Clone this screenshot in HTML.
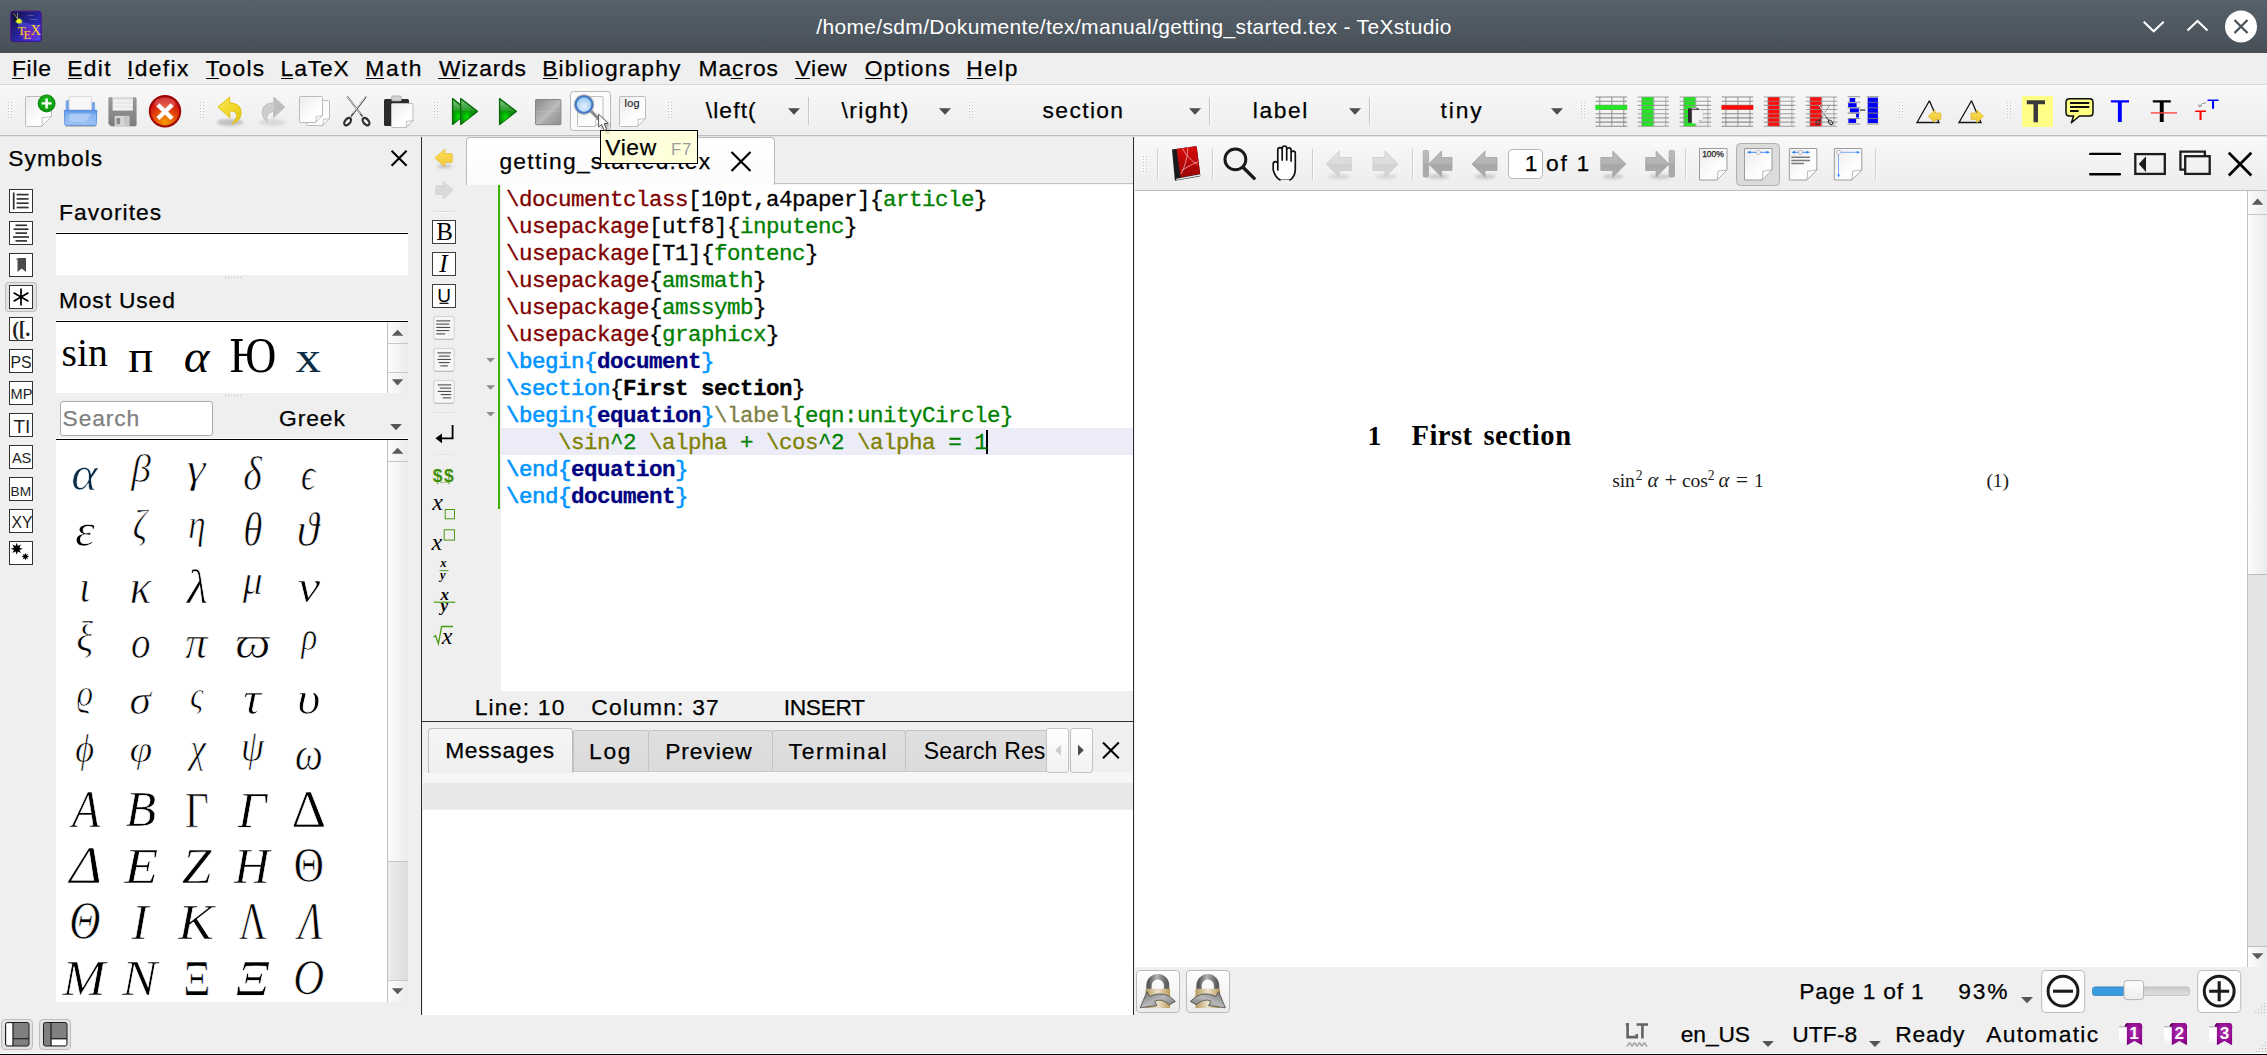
<!DOCTYPE html>
<html><head><meta charset="utf-8"><title>TeXstudio</title><style>
html,body{margin:0;padding:0;}
body{width:2267px;height:1055px;position:relative;overflow:hidden;background:#efefef;font-family:"Liberation Sans",sans-serif;}
body div,body svg,body span.t{position:absolute;}
span.t{white-space:pre;display:block;}
u{text-decoration:none;border-bottom:2px solid currentColor;}
</style></head><body>
<div style="left:0px;top:0px;width:2267px;height:53px;background:linear-gradient(#57616a,#475057);"></div>
<span class="t" style="left:816.3px;top:15px;font:normal normal 21px/23px 'Liberation Sans', sans-serif;color:#fff;letter-spacing:0.334px;">/home/sdm/Dokumente/tex/manual/getting_started.tex - TeXstudio</span>
<svg style="left:9px;top:9px;" width="34" height="34" viewBox="0 0 34 34"><defs><linearGradient id="ai1" x1="0" y1="0" x2="1" y2="1"><stop offset="0" stop-color="#141044"/><stop offset=".5" stop-color="#24249a"/><stop offset="1" stop-color="#3636f4"/></linearGradient><radialGradient id="ai2" cx=".55" cy=".62" r=".55"><stop offset="0" stop-color="#8a1fb0" stop-opacity=".95"/><stop offset="1" stop-color="#5a1fb0" stop-opacity="0"/></radialGradient><radialGradient id="ai3" cx=".5" cy=".5" r=".5"><stop offset="0" stop-color="#ffff30"/><stop offset=".55" stop-color="#d8e020"/><stop offset="1" stop-color="#30b060" stop-opacity="0"/></radialGradient></defs><rect x="1.8" y="2.2" width="30.4" height="30.4" rx="2.5" fill="url(#ai1)" stroke="#4a0f8a" stroke-width="1"/><path d="M8 12 L31 17 V31 H14 Z" fill="#6a5cff" opacity=".45"/><rect x="6" y="14" width="25" height="17" rx="4" fill="url(#ai2)"/><ellipse cx="9.8" cy="12" rx="4.6" ry="3.4" fill="url(#ai3)" transform="rotate(20 9.8 12)"/><path d="M4 3.6 L7 11 M4 3.6 L9 9 M9 3.4 V9.4 M4.6 13 L8 10" stroke="#111" stroke-width="1.2" fill="none"/><path d="M4.2 4 L8.6 9.4 V3.6" stroke="#ddd" stroke-width="0.6" fill="none"/><path d="M18.5 6.5 h6 M21 10.5 h7.5" stroke="#aab" stroke-width="0.6" opacity=".6"/><text x="8.6" y="25.6" font-family="'Liberation Serif', serif" font-size="13.5" fill="#ffd21e">T</text><text x="14.6" y="30.4" font-family="'Liberation Serif', serif" font-size="12.5" fill="#ffd21e">E</text><text x="21.4" y="26.2" font-family="'Liberation Serif', serif" font-size="14.5" fill="#ffd21e">X</text></svg>
<svg style="left:2138px;top:10px;" width="120" height="34" viewBox="0 0 120 34"><path d="M5.7 11.7 L15.7 21.3 L25.7 11.7" fill="none" stroke="#fff" stroke-width="2"/><path d="M49.5 20.5 L59.5 11 L69.5 20.5" fill="none" stroke="#fff" stroke-width="2"/><circle cx="103" cy="16.5" r="16" fill="#fff"/><path d="M96.5 10 L109.5 23 M109.5 10 L96.5 23" stroke="#475057" stroke-width="2.2" fill="none"/></svg>
<div style="left:0px;top:53px;width:2267px;height:31px;background:#efefef;"></div>
<div style="left:0px;top:84px;width:2267px;height:1px;background:#d9d9d9;"></div>
<span class="t" style="left:11.876px;top:55px;font:normal normal 22.8px/26px 'Liberation Sans', sans-serif;color:#000;letter-spacing:0.781px;-webkit-text-stroke-width:0.25px;">File</span>
<div style="left:12.1px;top:77.6px;width:11.700000000000001px;height:1.6px;background:#000;"></div>
<span class="t" style="left:67.276px;top:55px;font:normal normal 22.8px/26px 'Liberation Sans', sans-serif;color:#000;letter-spacing:1.307px;-webkit-text-stroke-width:0.25px;">Edit</span>
<div style="left:67.9px;top:77.6px;width:13.899999999999991px;height:1.6px;background:#000;"></div>
<span class="t" style="left:127.04799999999999px;top:55px;font:normal normal 22.8px/26px 'Liberation Sans', sans-serif;color:#000;letter-spacing:1.358px;-webkit-text-stroke-width:0.25px;">Idefix</span>
<div style="left:127.7px;top:77.6px;width:6.3999999999999915px;height:1.6px;background:#000;"></div>
<span class="t" style="left:205.744px;top:55px;font:normal normal 22.8px/26px 'Liberation Sans', sans-serif;color:#000;letter-spacing:1.329px;-webkit-text-stroke-width:0.25px;">Tools</span>
<div style="left:205.8px;top:77.6px;width:13.399999999999977px;height:1.6px;background:#000;"></div>
<span class="t" style="left:280.57599999999996px;top:55px;font:normal normal 22.8px/26px 'Liberation Sans', sans-serif;color:#000;letter-spacing:0.886px;-webkit-text-stroke-width:0.25px;">LaTeX</span>
<div style="left:280.8px;top:77.6px;width:12.199999999999989px;height:1.6px;background:#000;"></div>
<span class="t" style="left:365.176px;top:55px;font:normal normal 22.8px/26px 'Liberation Sans', sans-serif;color:#000;letter-spacing:1.897px;-webkit-text-stroke-width:0.25px;">Math</span>
<div style="left:365.9px;top:77.6px;width:17.900000000000034px;height:1.6px;background:#000;"></div>
<span class="t" style="left:438.98600000000005px;top:55px;font:normal normal 22.8px/26px 'Liberation Sans', sans-serif;color:#000;letter-spacing:0.767px;-webkit-text-stroke-width:0.25px;">Wizards</span>
<div style="left:437.9px;top:77.6px;width:22.200000000000045px;height:1.6px;background:#000;"></div>
<span class="t" style="left:542.176px;top:55px;font:normal normal 22.8px/26px 'Liberation Sans', sans-serif;color:#000;letter-spacing:1.165px;-webkit-text-stroke-width:0.25px;">Bibliography</span>
<div style="left:543px;top:77.6px;width:14.799999999999955px;height:1.6px;background:#000;"></div>
<span class="t" style="left:698.576px;top:55px;font:normal normal 22.8px/26px 'Liberation Sans', sans-serif;color:#000;letter-spacing:0.928px;-webkit-text-stroke-width:0.25px;">Macros</span>
<div style="left:731.1px;top:77.6px;width:11.799999999999955px;height:1.6px;background:#000;"></div>
<span class="t" style="left:795.586px;top:55px;font:normal normal 22.8px/26px 'Liberation Sans', sans-serif;color:#000;letter-spacing:0.731px;-webkit-text-stroke-width:0.25px;">View</span>
<div style="left:795.2px;top:77.6px;width:14.699999999999932px;height:1.6px;background:#000;"></div>
<span class="t" style="left:864.6740000000001px;top:55px;font:normal normal 22.8px/26px 'Liberation Sans', sans-serif;color:#000;letter-spacing:1.096px;-webkit-text-stroke-width:0.25px;">Options</span>
<div style="left:864.9px;top:77.6px;width:16.700000000000045px;height:1.6px;background:#000;"></div>
<span class="t" style="left:966.176px;top:55px;font:normal normal 22.8px/26px 'Liberation Sans', sans-serif;color:#000;letter-spacing:1.494px;-webkit-text-stroke-width:0.25px;">Help</span>
<div style="left:967px;top:77.6px;width:16.100000000000023px;height:1.6px;background:#000;"></div>
<div style="left:0px;top:85px;width:2267px;height:50px;background:linear-gradient(#f8f8f8,#ededed);"></div>
<div style="left:0px;top:135px;width:2267px;height:1px;background:#bdbdbd;"></div>
<div style="left:0px;top:136px;width:2267px;height:1px;background:#e4e4e4;"></div>
<svg style="left:0px;top:0px;width:0;height:0;" width="1" height="1" viewBox="0 0 1 1"><defs>
<filter id="bl" x="-30%" y="-100%" width="160%" height="300%"><feGaussianBlur stdDeviation="1.4"/></filter>
<linearGradient id="gpage" x1="0" y1="0" x2="1" y2="1"><stop offset="0" stop-color="#ececec"/><stop offset=".6" stop-color="#fdfdfd"/><stop offset="1" stop-color="#ffffff"/></linearGradient>
<linearGradient id="ggreen" x1="0" y1="0" x2="0" y2="1"><stop offset="0" stop-color="#4fb34f"/><stop offset=".55" stop-color="#0a8a0a"/><stop offset="1" stop-color="#10b010"/></linearGradient>
<radialGradient id="ggreen2" cx=".4" cy=".75" r=".6"><stop offset="0" stop-color="#18d818"/><stop offset="1" stop-color="#0b7d0b"/></radialGradient>
<linearGradient id="gstop" x1="0" y1="0" x2="1" y2="1"><stop offset="0" stop-color="#909090"/><stop offset=".5" stop-color="#c6c6c6"/><stop offset=".52" stop-color="#b0b0b0"/><stop offset="1" stop-color="#8c8c8c"/></linearGradient>
<radialGradient id="gred" cx=".5" cy=".85" r=".85"><stop offset="0" stop-color="#f79a00"/><stop offset=".45" stop-color="#e24a0a"/><stop offset=".8" stop-color="#d21410"/><stop offset="1" stop-color="#b00808"/></radialGradient>
<linearGradient id="gblue" x1="0" y1="0" x2="0" y2="1"><stop offset="0" stop-color="#5591e6"/><stop offset=".35" stop-color="#8ab6f2"/><stop offset="1" stop-color="#9cc2f4"/></linearGradient>
<linearGradient id="gflop" x1="0" y1="0" x2="0" y2="1"><stop offset="0" stop-color="#9a9a9a"/><stop offset="1" stop-color="#7c7c7c"/></linearGradient>
<linearGradient id="gyel" x1="0" y1="0" x2="0" y2="1"><stop offset="0" stop-color="#f7dc55"/><stop offset="1" stop-color="#f0c832"/></linearGradient>
<radialGradient id="gglass" cx=".5" cy=".6" r=".6"><stop offset="0" stop-color="#e8f4ff"/><stop offset="1" stop-color="#8cc0ee"/></radialGradient>
<radialGradient id="ggplus" cx=".5" cy=".4" r=".7"><stop offset="0" stop-color="#1fc01f"/><stop offset="1" stop-color="#078a07"/></radialGradient>
</defs></svg>
<svg style="left:0px;top:85px;" width="2267" height="50" viewBox="0 85 2267 50"><rect x="7.5" y="101.5" width="2" height="2" fill="#fff" opacity=".7"/><rect x="10.5" y="101.5" width="2" height="2" fill="#fff" opacity=".7"/><rect x="7.5" y="104.5" width="2" height="2" fill="#fff" opacity=".7"/><rect x="10.5" y="104.5" width="2" height="2" fill="#fff" opacity=".7"/><rect x="7.5" y="107.5" width="2" height="2" fill="#fff" opacity=".7"/><rect x="10.5" y="107.5" width="2" height="2" fill="#fff" opacity=".7"/><rect x="7.5" y="110.5" width="2" height="2" fill="#fff" opacity=".7"/><rect x="10.5" y="110.5" width="2" height="2" fill="#fff" opacity=".7"/><rect x="7.5" y="113.5" width="2" height="2" fill="#fff" opacity=".7"/><rect x="10.5" y="113.5" width="2" height="2" fill="#fff" opacity=".7"/><rect x="7.5" y="116.5" width="2" height="2" fill="#fff" opacity=".7"/><rect x="10.5" y="116.5" width="2" height="2" fill="#fff" opacity=".7"/><rect x="8" y="102" width="1" height="1" fill="#bdbdbd"/><rect x="11" y="102" width="1" height="1" fill="#bdbdbd"/><rect x="8" y="105" width="1" height="1" fill="#bdbdbd"/><rect x="11" y="105" width="1" height="1" fill="#bdbdbd"/><rect x="8" y="108" width="1" height="1" fill="#bdbdbd"/><rect x="11" y="108" width="1" height="1" fill="#bdbdbd"/><rect x="8" y="111" width="1" height="1" fill="#bdbdbd"/><rect x="11" y="111" width="1" height="1" fill="#bdbdbd"/><rect x="8" y="114" width="1" height="1" fill="#bdbdbd"/><rect x="11" y="114" width="1" height="1" fill="#bdbdbd"/><rect x="8" y="117" width="1" height="1" fill="#bdbdbd"/><rect x="11" y="117" width="1" height="1" fill="#bdbdbd"/><path d="M26.5 96.5 H50.5 Q51.5 96.5 51.5 97.5 V116.5 L41.5 126.5 H26.5 Q25.5 126.5 25.5 125.5 V97.5 Q25.5 96.5 26.5 96.5 Z" fill="url(#gpage)" stroke="#bcbcbc" stroke-width="1"/><path d="M51.5 116.5 Q46.0 117.5 42.0 117.5 Q43.0 122.0 41.5 126.5 Z" fill="#fff" stroke="#b4b4b4" stroke-width="0.8"/><circle cx="46.6" cy="103.4" r="8.5" fill="url(#ggplus)" stroke="#078007" stroke-width="0.9"/><path d="M41.6 103.4 H51.6 M46.6 98.4 V108.4" stroke="#fff" stroke-width="2.4"/><path d="M66.8 100.6 H69.6 V110.5 H66.2 V101.2 Q66.2 100.6 66.8 100.6 Z M91.3 102.4 H94 Q94.6 102.4 94.6 103 V110.5 H91.3 Z" fill="#6fa2ea" stroke="#5b90de" stroke-width="0.6"/><path d="M69.6 96.6 H91 Q91.6 96.6 91.6 97.2 V111 H69.1 V97.2 Q69.1 96.6 69.6 96.6 Z" fill="#f7f7f7" stroke="#d0d0d0" stroke-width="0.8"/><path d="M64.3 110.3 H96.8 L96.2 124.4 Q96.1 125.4 95.1 125.4 H66 Q65 125.4 64.9 124.4 Z" fill="url(#gblue)" stroke="#4f88d8" stroke-width="0.9"/><path d="M69.5 113.5 H91.5 L86 121.5 H69.5 Z" fill="#c4dcfa" opacity=".55"/><path d="M65.5 126.3 H95.6" stroke="#8f8f8f" stroke-width="0.9" opacity=".7"/><path d="M109.5 97.3 H135.2 Q136.6 97.3 136.6 98.7 V124.8 Q136.6 126.2 135.2 126.2 H110.8 L108.4 123.8 V98.6 Q108.4 97.3 109.5 97.3 Z" fill="url(#gflop)"/><rect x="112.6" y="97.3" width="20.3" height="13.3" fill="#f1f1f1"/><rect x="112.6" y="97.3" width="20.3" height="2.2" fill="#dadada"/><path d="M113 103 H132.6 M113 106.6 H132.6" stroke="#dedede" stroke-width="0.9"/><rect x="114.7" y="115.9" width="14.8" height="10.3" fill="#d4d4d4"/><rect x="124" y="115.9" width="5.5" height="10.3" fill="#bdbdbd" opacity=".6"/><rect x="116.5" y="118" width="3.6" height="6.2" fill="#8a8a8a"/><circle cx="165" cy="111.3" r="15.2" fill="url(#gred)" stroke="#a00505" stroke-width="2"/><ellipse cx="165" cy="103.6" rx="10.5" ry="6" fill="#fff" opacity=".22"/><path d="M157.9 104.9 L172.1 118.5 M172.1 104.9 L157.9 118.5" stroke="#fff" stroke-width="4.3"/><rect x="199.5" y="101.5" width="2" height="2" fill="#fff" opacity=".7"/><rect x="202.5" y="101.5" width="2" height="2" fill="#fff" opacity=".7"/><rect x="199.5" y="104.5" width="2" height="2" fill="#fff" opacity=".7"/><rect x="202.5" y="104.5" width="2" height="2" fill="#fff" opacity=".7"/><rect x="199.5" y="107.5" width="2" height="2" fill="#fff" opacity=".7"/><rect x="202.5" y="107.5" width="2" height="2" fill="#fff" opacity=".7"/><rect x="199.5" y="110.5" width="2" height="2" fill="#fff" opacity=".7"/><rect x="202.5" y="110.5" width="2" height="2" fill="#fff" opacity=".7"/><rect x="199.5" y="113.5" width="2" height="2" fill="#fff" opacity=".7"/><rect x="202.5" y="113.5" width="2" height="2" fill="#fff" opacity=".7"/><rect x="199.5" y="116.5" width="2" height="2" fill="#fff" opacity=".7"/><rect x="202.5" y="116.5" width="2" height="2" fill="#fff" opacity=".7"/><rect x="200" y="102" width="1" height="1" fill="#bdbdbd"/><rect x="203" y="102" width="1" height="1" fill="#bdbdbd"/><rect x="200" y="105" width="1" height="1" fill="#bdbdbd"/><rect x="203" y="105" width="1" height="1" fill="#bdbdbd"/><rect x="200" y="108" width="1" height="1" fill="#bdbdbd"/><rect x="203" y="108" width="1" height="1" fill="#bdbdbd"/><rect x="200" y="111" width="1" height="1" fill="#bdbdbd"/><rect x="203" y="111" width="1" height="1" fill="#bdbdbd"/><rect x="200" y="114" width="1" height="1" fill="#bdbdbd"/><rect x="203" y="114" width="1" height="1" fill="#bdbdbd"/><rect x="200" y="117" width="1" height="1" fill="#bdbdbd"/><rect x="203" y="117" width="1" height="1" fill="#bdbdbd"/><defs><linearGradient id="gyu" x1="0" y1="0" x2="1" y2="1"><stop offset="0" stop-color="#f7e858"/><stop offset=".5" stop-color="#f2d92a"/><stop offset="1" stop-color="#e4c212"/></linearGradient></defs><ellipse cx="230" cy="122.4" rx="13" ry="3.4" fill="#000" opacity=".2" filter="url(#bl)"/><path d="M217.9 107.1 L229.5 97 L229.8 102.8 Q241.6 103.4 241.1 113.6 Q240.5 121.2 231.8 124 Q237.6 118 236.6 114.6 Q235.2 110.6 229.8 111.1 L229.9 117.8 Z" fill="url(#gyu)" stroke="#dcbe10" stroke-width="0.9" stroke-linejoin="round"/><ellipse cx="272.5" cy="122.4" rx="13" ry="3.4" fill="#000" opacity=".09" filter="url(#bl)"/><path d="M284.9 107.1 L273.9 97 L273.6 102.8 Q261.8 103.4 262.2 113 Q262.6 118.8 267.2 121 Q265 113.5 273.6 111.1 L273.5 117.8 Z" fill="#cdcdcd" stroke="#bcbcbc" stroke-width="0.9" stroke-linejoin="round"/><path d="M284.2 107.1 L274.2 98 L274 116.6 Z" fill="#b9b9b9" opacity=".7"/><path d="M307.5 100.5 H328.5 Q329.5 100.5 329.5 101.5 V118.5 L322.5 125.5 H307.5 Q306.5 125.5 306.5 124.5 V101.5 Q306.5 100.5 307.5 100.5 Z" fill="url(#gpage)" stroke="#bcbcbc" stroke-width="1"/><path d="M329.5 118.5 Q325.65 119.2 323.0 119.5 Q324.0 122.35 322.5 125.5 Z" fill="#fff" stroke="#b4b4b4" stroke-width="0.8"/><path d="M300.5 96.5 H321.5 Q322.5 96.5 322.5 97.5 V115.5 L315.5 122.5 H300.5 Q299.5 122.5 299.5 121.5 V97.5 Q299.5 96.5 300.5 96.5 Z" fill="url(#gpage)" stroke="#bcbcbc" stroke-width="1"/><path d="M322.5 115.5 Q318.65 116.2 316.0 116.5 Q317.0 119.35 315.5 122.5 Z" fill="#fff" stroke="#b4b4b4" stroke-width="0.8"/><path d="M347.2 96.5 L362.5 116.5 M366.2 96.5 L351 116.5" stroke="#4a4a4a" stroke-width="1.5" fill="none"/><path d="M346.8 96.3 L360.5 114" stroke="#dcdcdc" stroke-width="1" /><path d="M365.8 96.3 L353 113" stroke="#dcdcdc" stroke-width="1"/><ellipse cx="347.6" cy="121.6" rx="2.6" ry="4.3" transform="rotate(40 347.6 121.6)" fill="none" stroke="#2e2e2e" stroke-width="2.2"/><ellipse cx="366" cy="121.6" rx="2.6" ry="4.3" transform="rotate(-40 366 121.6)" fill="none" stroke="#2e2e2e" stroke-width="2.2"/><rect x="384" y="99" width="25" height="27" rx="1.5" fill="#2b2b2b"/><rect x="391.5" y="96" width="10" height="5" rx="1.5" fill="#d2d2d2" stroke="#9a9a9a" stroke-width="0.7"/><path d="M392.5 103.5 H412.0 Q413.0 103.5 413.0 104.5 V120.5 L406.0 127.5 H392.5 Q391.5 127.5 391.5 126.5 V104.5 Q391.5 103.5 392.5 103.5 Z" fill="url(#gpage)" stroke="#bcbcbc" stroke-width="1"/><path d="M413.0 120.5 Q409.15 121.2 406.5 121.5 Q407.5 124.35 406.0 127.5 Z" fill="#fff" stroke="#b4b4b4" stroke-width="0.8"/><rect x="433.5" y="101.5" width="2" height="2" fill="#fff" opacity=".7"/><rect x="436.5" y="101.5" width="2" height="2" fill="#fff" opacity=".7"/><rect x="433.5" y="104.5" width="2" height="2" fill="#fff" opacity=".7"/><rect x="436.5" y="104.5" width="2" height="2" fill="#fff" opacity=".7"/><rect x="433.5" y="107.5" width="2" height="2" fill="#fff" opacity=".7"/><rect x="436.5" y="107.5" width="2" height="2" fill="#fff" opacity=".7"/><rect x="433.5" y="110.5" width="2" height="2" fill="#fff" opacity=".7"/><rect x="436.5" y="110.5" width="2" height="2" fill="#fff" opacity=".7"/><rect x="433.5" y="113.5" width="2" height="2" fill="#fff" opacity=".7"/><rect x="436.5" y="113.5" width="2" height="2" fill="#fff" opacity=".7"/><rect x="433.5" y="116.5" width="2" height="2" fill="#fff" opacity=".7"/><rect x="436.5" y="116.5" width="2" height="2" fill="#fff" opacity=".7"/><rect x="434" y="102" width="1" height="1" fill="#bdbdbd"/><rect x="437" y="102" width="1" height="1" fill="#bdbdbd"/><rect x="434" y="105" width="1" height="1" fill="#bdbdbd"/><rect x="437" y="105" width="1" height="1" fill="#bdbdbd"/><rect x="434" y="108" width="1" height="1" fill="#bdbdbd"/><rect x="437" y="108" width="1" height="1" fill="#bdbdbd"/><rect x="434" y="111" width="1" height="1" fill="#bdbdbd"/><rect x="437" y="111" width="1" height="1" fill="#bdbdbd"/><rect x="434" y="114" width="1" height="1" fill="#bdbdbd"/><rect x="437" y="114" width="1" height="1" fill="#bdbdbd"/><rect x="434" y="117" width="1" height="1" fill="#bdbdbd"/><rect x="437" y="117" width="1" height="1" fill="#bdbdbd"/><defs><linearGradient id="gtri" x1="0" y1="0" x2="0" y2="1"><stop offset="0" stop-color="#86cf86"/><stop offset=".47" stop-color="#2c962c"/><stop offset=".5" stop-color="#0b8c0b"/><stop offset="1" stop-color="#0a8a0a"/></linearGradient><radialGradient id="gglow" cx=".35" cy=".72" r=".38"><stop offset="0" stop-color="#00e400"/><stop offset="1" stop-color="#00c000" stop-opacity="0"/></radialGradient><linearGradient id="gstop2" x1="0" y1="0" x2="1" y2="1"><stop offset="0" stop-color="#8a8a8a"/><stop offset=".55" stop-color="#bcbcbc"/><stop offset=".6" stop-color="#adadad"/><stop offset="1" stop-color="#8e8e8e"/></linearGradient></defs><path d="M452.59999999999997 98.6 L468.4 111.4 L452.59999999999997 124.4 Z" fill="url(#gtri)" stroke="#0a6a0a" stroke-width="1.4" stroke-linejoin="round"/><path d="M452.59999999999997 98.6 L468.4 111.4 L452.59999999999997 124.4 Z" fill="url(#gglow)"/><path d="M460.7 98.6 L477.4 111.4 L460.7 124.4 Z" fill="url(#gtri)" stroke="#0a6a0a" stroke-width="1.4" stroke-linejoin="round"/><path d="M460.7 98.6 L477.4 111.4 L460.7 124.4 Z" fill="url(#gglow)"/><path d="M499.59999999999997 98.6 L516.3 111.4 L499.59999999999997 124.4 Z" fill="url(#gtri)" stroke="#0a6a0a" stroke-width="1.4" stroke-linejoin="round"/><path d="M499.59999999999997 98.6 L516.3 111.4 L499.59999999999997 124.4 Z" fill="url(#gglow)"/><rect x="535.5" y="99.5" width="25.4" height="25.2" rx="0.8" fill="url(#gstop2)" stroke="#808080" stroke-width="0.9"/><path d="M536 111.6 H560.5" stroke="#c8c8c8" stroke-width="0.6" opacity=".6"/><rect x="570.5" y="91.5" width="40" height="39" rx="3" fill="#fbfbfb" stroke="#b9b9b9"/><path d="M578.5 96.5 H602.0 Q603.0 96.5 603.0 97.5 V118.5 L595.0 126.5 H578.5 Q577.5 126.5 577.5 125.5 V97.5 Q577.5 96.5 578.5 96.5 Z" fill="url(#gpage)" stroke="#bcbcbc" stroke-width="1"/><path d="M603.0 118.5 Q598.6 119.3 595.5 119.5 Q596.5 122.9 595.0 126.5 Z" fill="#fff" stroke="#b4b4b4" stroke-width="0.8"/><path d="M591 111 L600 120.5" stroke="#8a8a8a" stroke-width="3.2" stroke-linecap="round"/><circle cx="584" cy="104.6" r="8.4" fill="url(#gglass)" stroke="#3f78c8" stroke-width="2.2"/><circle cx="584" cy="104.6" r="9.8" fill="none" stroke="#9a9a9a" stroke-width="0.8"/><path d="M620.5 96.5 H644.5 Q645.5 96.5 645.5 97.5 V118.5 L637.5 126.5 H620.5 Q619.5 126.5 619.5 125.5 V97.5 Q619.5 96.5 620.5 96.5 Z" fill="url(#gpage)" stroke="#bcbcbc" stroke-width="1"/><path d="M645.5 118.5 Q641.1 119.3 638.0 119.5 Q639.0 122.9 637.5 126.5 Z" fill="#fff" stroke="#b4b4b4" stroke-width="0.8"/><rect x="667.5" y="101.5" width="2" height="2" fill="#fff" opacity=".7"/><rect x="670.5" y="101.5" width="2" height="2" fill="#fff" opacity=".7"/><rect x="667.5" y="104.5" width="2" height="2" fill="#fff" opacity=".7"/><rect x="670.5" y="104.5" width="2" height="2" fill="#fff" opacity=".7"/><rect x="667.5" y="107.5" width="2" height="2" fill="#fff" opacity=".7"/><rect x="670.5" y="107.5" width="2" height="2" fill="#fff" opacity=".7"/><rect x="667.5" y="110.5" width="2" height="2" fill="#fff" opacity=".7"/><rect x="670.5" y="110.5" width="2" height="2" fill="#fff" opacity=".7"/><rect x="667.5" y="113.5" width="2" height="2" fill="#fff" opacity=".7"/><rect x="670.5" y="113.5" width="2" height="2" fill="#fff" opacity=".7"/><rect x="667.5" y="116.5" width="2" height="2" fill="#fff" opacity=".7"/><rect x="670.5" y="116.5" width="2" height="2" fill="#fff" opacity=".7"/><rect x="668" y="102" width="1" height="1" fill="#bdbdbd"/><rect x="671" y="102" width="1" height="1" fill="#bdbdbd"/><rect x="668" y="105" width="1" height="1" fill="#bdbdbd"/><rect x="671" y="105" width="1" height="1" fill="#bdbdbd"/><rect x="668" y="108" width="1" height="1" fill="#bdbdbd"/><rect x="671" y="108" width="1" height="1" fill="#bdbdbd"/><rect x="668" y="111" width="1" height="1" fill="#bdbdbd"/><rect x="671" y="111" width="1" height="1" fill="#bdbdbd"/><rect x="668" y="114" width="1" height="1" fill="#bdbdbd"/><rect x="671" y="114" width="1" height="1" fill="#bdbdbd"/><rect x="668" y="117" width="1" height="1" fill="#bdbdbd"/><rect x="671" y="117" width="1" height="1" fill="#bdbdbd"/><path d="M788 108.2 H800 L794 114.80000000000001 Z" fill="#4b4b4b"/><path d="M808.5 97 V125" stroke="#c6c6c6" stroke-width="1"/><path d="M809.5 97 V125" stroke="#fbfbfb" stroke-width="1"/><path d="M939 108.2 H951 L945 114.80000000000001 Z" fill="#4b4b4b"/><rect x="968.5" y="101.5" width="2" height="2" fill="#fff" opacity=".7"/><rect x="971.5" y="101.5" width="2" height="2" fill="#fff" opacity=".7"/><rect x="968.5" y="104.5" width="2" height="2" fill="#fff" opacity=".7"/><rect x="971.5" y="104.5" width="2" height="2" fill="#fff" opacity=".7"/><rect x="968.5" y="107.5" width="2" height="2" fill="#fff" opacity=".7"/><rect x="971.5" y="107.5" width="2" height="2" fill="#fff" opacity=".7"/><rect x="968.5" y="110.5" width="2" height="2" fill="#fff" opacity=".7"/><rect x="971.5" y="110.5" width="2" height="2" fill="#fff" opacity=".7"/><rect x="968.5" y="113.5" width="2" height="2" fill="#fff" opacity=".7"/><rect x="971.5" y="113.5" width="2" height="2" fill="#fff" opacity=".7"/><rect x="968.5" y="116.5" width="2" height="2" fill="#fff" opacity=".7"/><rect x="971.5" y="116.5" width="2" height="2" fill="#fff" opacity=".7"/><rect x="969" y="102" width="1" height="1" fill="#bdbdbd"/><rect x="972" y="102" width="1" height="1" fill="#bdbdbd"/><rect x="969" y="105" width="1" height="1" fill="#bdbdbd"/><rect x="972" y="105" width="1" height="1" fill="#bdbdbd"/><rect x="969" y="108" width="1" height="1" fill="#bdbdbd"/><rect x="972" y="108" width="1" height="1" fill="#bdbdbd"/><rect x="969" y="111" width="1" height="1" fill="#bdbdbd"/><rect x="972" y="111" width="1" height="1" fill="#bdbdbd"/><rect x="969" y="114" width="1" height="1" fill="#bdbdbd"/><rect x="972" y="114" width="1" height="1" fill="#bdbdbd"/><rect x="969" y="117" width="1" height="1" fill="#bdbdbd"/><rect x="972" y="117" width="1" height="1" fill="#bdbdbd"/><path d="M1189 108.2 H1201 L1195 114.80000000000001 Z" fill="#4b4b4b"/><path d="M1209.5 97 V125" stroke="#c6c6c6" stroke-width="1"/><path d="M1210.5 97 V125" stroke="#fbfbfb" stroke-width="1"/><path d="M1349 108.2 H1361 L1355 114.80000000000001 Z" fill="#4b4b4b"/><path d="M1369.5 97 V125" stroke="#c6c6c6" stroke-width="1"/><path d="M1370.5 97 V125" stroke="#fbfbfb" stroke-width="1"/><path d="M1551 108.2 H1563 L1557 114.80000000000001 Z" fill="#4b4b4b"/><rect x="1580.5" y="101.5" width="2" height="2" fill="#fff" opacity=".7"/><rect x="1583.5" y="101.5" width="2" height="2" fill="#fff" opacity=".7"/><rect x="1580.5" y="104.5" width="2" height="2" fill="#fff" opacity=".7"/><rect x="1583.5" y="104.5" width="2" height="2" fill="#fff" opacity=".7"/><rect x="1580.5" y="107.5" width="2" height="2" fill="#fff" opacity=".7"/><rect x="1583.5" y="107.5" width="2" height="2" fill="#fff" opacity=".7"/><rect x="1580.5" y="110.5" width="2" height="2" fill="#fff" opacity=".7"/><rect x="1583.5" y="110.5" width="2" height="2" fill="#fff" opacity=".7"/><rect x="1580.5" y="113.5" width="2" height="2" fill="#fff" opacity=".7"/><rect x="1583.5" y="113.5" width="2" height="2" fill="#fff" opacity=".7"/><rect x="1580.5" y="116.5" width="2" height="2" fill="#fff" opacity=".7"/><rect x="1583.5" y="116.5" width="2" height="2" fill="#fff" opacity=".7"/><rect x="1581" y="102" width="1" height="1" fill="#bdbdbd"/><rect x="1584" y="102" width="1" height="1" fill="#bdbdbd"/><rect x="1581" y="105" width="1" height="1" fill="#bdbdbd"/><rect x="1584" y="105" width="1" height="1" fill="#bdbdbd"/><rect x="1581" y="108" width="1" height="1" fill="#bdbdbd"/><rect x="1584" y="108" width="1" height="1" fill="#bdbdbd"/><rect x="1581" y="111" width="1" height="1" fill="#bdbdbd"/><rect x="1584" y="111" width="1" height="1" fill="#bdbdbd"/><rect x="1581" y="114" width="1" height="1" fill="#bdbdbd"/><rect x="1584" y="114" width="1" height="1" fill="#bdbdbd"/><rect x="1581" y="117" width="1" height="1" fill="#bdbdbd"/><rect x="1584" y="117" width="1" height="1" fill="#bdbdbd"/><rect x="1595.6" y="105.2" width="31.5" height="4.4" fill="#1fe81f"/><path d="M1595.6 97.00 H1627.1" stroke="#8c8c8c" stroke-width="1.1"/><path d="M1595.6 101.18 H1627.1" stroke="#8c8c8c" stroke-width="1.1"/><path d="M1595.6 105.36 H1627.1" stroke="#8c8c8c" stroke-width="1.1"/><path d="M1595.6 109.54 H1627.1" stroke="#8c8c8c" stroke-width="1.1"/><path d="M1595.6 113.72 H1627.1" stroke="#8c8c8c" stroke-width="1.1"/><path d="M1595.6 117.90 H1627.1" stroke="#8c8c8c" stroke-width="1.1"/><path d="M1595.6 122.08 H1627.1" stroke="#8c8c8c" stroke-width="1.1"/><path d="M1595.6 126.26 H1627.1" stroke="#8c8c8c" stroke-width="1.1"/><path d="M1599.8 97 V126.3 M1611.8 97 V126.3 M1623.8 97 V126.3" stroke="#8c8c8c" stroke-width="0.9"/><rect x="1595.6" y="105.2" width="31.5" height="4.4" fill="#1fe81f" opacity=".92"/><rect x="1641.83" y="97" width="11.6" height="29.3" fill="#1fe81f"/><path d="M1637.6299999999999 97.00 H1669.1299999999999" stroke="#8c8c8c" stroke-width="1.1" opacity=".8"/><path d="M1637.6299999999999 101.18 H1669.1299999999999" stroke="#8c8c8c" stroke-width="1.1" opacity=".8"/><path d="M1637.6299999999999 105.36 H1669.1299999999999" stroke="#8c8c8c" stroke-width="1.1" opacity=".8"/><path d="M1637.6299999999999 109.54 H1669.1299999999999" stroke="#8c8c8c" stroke-width="1.1" opacity=".8"/><path d="M1637.6299999999999 113.72 H1669.1299999999999" stroke="#8c8c8c" stroke-width="1.1" opacity=".8"/><path d="M1637.6299999999999 117.90 H1669.1299999999999" stroke="#8c8c8c" stroke-width="1.1" opacity=".8"/><path d="M1637.6299999999999 122.08 H1669.1299999999999" stroke="#8c8c8c" stroke-width="1.1" opacity=".8"/><path d="M1637.6299999999999 126.26 H1669.1299999999999" stroke="#8c8c8c" stroke-width="1.1" opacity=".8"/><path d="M1641.83 97 V126.3 M1653.83 97 V126.3 M1665.83 97 V126.3" stroke="#8c8c8c" stroke-width="0.9" opacity=".75"/><rect x="1683.86" y="97" width="11.6" height="29.3" fill="#1fe81f"/><path d="M1679.6599999999999 97.00 H1711.1599999999999" stroke="#8c8c8c" stroke-width="1.1" opacity=".8"/><path d="M1679.6599999999999 101.18 H1711.1599999999999" stroke="#8c8c8c" stroke-width="1.1" opacity=".8"/><path d="M1679.6599999999999 105.36 H1711.1599999999999" stroke="#8c8c8c" stroke-width="1.1" opacity=".8"/><path d="M1679.6599999999999 109.54 H1711.1599999999999" stroke="#8c8c8c" stroke-width="1.1" opacity=".8"/><path d="M1679.6599999999999 113.72 H1711.1599999999999" stroke="#8c8c8c" stroke-width="1.1" opacity=".8"/><path d="M1679.6599999999999 117.90 H1711.1599999999999" stroke="#8c8c8c" stroke-width="1.1" opacity=".8"/><path d="M1679.6599999999999 122.08 H1711.1599999999999" stroke="#8c8c8c" stroke-width="1.1" opacity=".8"/><path d="M1679.6599999999999 126.26 H1711.1599999999999" stroke="#8c8c8c" stroke-width="1.1" opacity=".8"/><path d="M1683.86 97 V126.3 M1695.86 97 V126.3 M1707.86 97 V126.3" stroke="#8c8c8c" stroke-width="0.9" opacity=".75"/><rect x="1721.6899999999998" y="105.2" width="31.5" height="4.4" fill="#ff0a0a"/><path d="M1721.6899999999998 97.00 H1753.1899999999998" stroke="#8c8c8c" stroke-width="1.1"/><path d="M1721.6899999999998 101.18 H1753.1899999999998" stroke="#8c8c8c" stroke-width="1.1"/><path d="M1721.6899999999998 105.36 H1753.1899999999998" stroke="#8c8c8c" stroke-width="1.1"/><path d="M1721.6899999999998 109.54 H1753.1899999999998" stroke="#8c8c8c" stroke-width="1.1"/><path d="M1721.6899999999998 113.72 H1753.1899999999998" stroke="#8c8c8c" stroke-width="1.1"/><path d="M1721.6899999999998 117.90 H1753.1899999999998" stroke="#8c8c8c" stroke-width="1.1"/><path d="M1721.6899999999998 122.08 H1753.1899999999998" stroke="#8c8c8c" stroke-width="1.1"/><path d="M1721.6899999999998 126.26 H1753.1899999999998" stroke="#8c8c8c" stroke-width="1.1"/><path d="M1725.8899999999999 97 V126.3 M1737.8899999999999 97 V126.3 M1749.8899999999999 97 V126.3" stroke="#8c8c8c" stroke-width="0.9"/><rect x="1721.6899999999998" y="105.2" width="31.5" height="4.4" fill="#ff0a0a" opacity=".92"/><rect x="1767.9199999999998" y="97" width="11.6" height="29.3" fill="#ff0a0a"/><path d="M1763.7199999999998 97.00 H1795.2199999999998" stroke="#8c8c8c" stroke-width="1.1" opacity=".8"/><path d="M1763.7199999999998 101.18 H1795.2199999999998" stroke="#8c8c8c" stroke-width="1.1" opacity=".8"/><path d="M1763.7199999999998 105.36 H1795.2199999999998" stroke="#8c8c8c" stroke-width="1.1" opacity=".8"/><path d="M1763.7199999999998 109.54 H1795.2199999999998" stroke="#8c8c8c" stroke-width="1.1" opacity=".8"/><path d="M1763.7199999999998 113.72 H1795.2199999999998" stroke="#8c8c8c" stroke-width="1.1" opacity=".8"/><path d="M1763.7199999999998 117.90 H1795.2199999999998" stroke="#8c8c8c" stroke-width="1.1" opacity=".8"/><path d="M1763.7199999999998 122.08 H1795.2199999999998" stroke="#8c8c8c" stroke-width="1.1" opacity=".8"/><path d="M1763.7199999999998 126.26 H1795.2199999999998" stroke="#8c8c8c" stroke-width="1.1" opacity=".8"/><path d="M1767.9199999999998 97 V126.3 M1779.9199999999998 97 V126.3 M1791.9199999999998 97 V126.3" stroke="#8c8c8c" stroke-width="0.9" opacity=".75"/><rect x="1809.95" y="97" width="11.6" height="29.3" fill="#ff0a0a"/><path d="M1805.75 97.00 H1837.25" stroke="#8c8c8c" stroke-width="1.1" opacity=".8"/><path d="M1805.75 101.18 H1837.25" stroke="#8c8c8c" stroke-width="1.1" opacity=".8"/><path d="M1805.75 105.36 H1837.25" stroke="#8c8c8c" stroke-width="1.1" opacity=".8"/><path d="M1805.75 109.54 H1837.25" stroke="#8c8c8c" stroke-width="1.1" opacity=".8"/><path d="M1805.75 113.72 H1837.25" stroke="#8c8c8c" stroke-width="1.1" opacity=".8"/><path d="M1805.75 117.90 H1837.25" stroke="#8c8c8c" stroke-width="1.1" opacity=".8"/><path d="M1805.75 122.08 H1837.25" stroke="#8c8c8c" stroke-width="1.1" opacity=".8"/><path d="M1805.75 126.26 H1837.25" stroke="#8c8c8c" stroke-width="1.1" opacity=".8"/><path d="M1809.95 97 V126.3 M1821.95 97 V126.3 M1833.95 97 V126.3" stroke="#8c8c8c" stroke-width="0.9" opacity=".75"/><rect x="1688" y="108.3" width="11" height="14.5" rx="0.8" fill="#2b2b2b"/><rect x="1691.3" y="107.2" width="5" height="2" fill="#aaa"/><path d="M1692 110 H1702 Q1703 110 1703 111 V118 Q1703 122 1699 123.3 H1692 Z" fill="#f4f4f4" stroke="#cfcfcf" stroke-width="0.5"/><circle cx="1700.2" cy="121.5" r="1.3" fill="none" stroke="#888" stroke-width="0.6"/><path d="M1818 105 L1829 121 M1829.5 105 L1819 121" stroke="#3c3c3c" stroke-width="1" fill="none"/><path d="M1818.8 105 L1827 117 M1828.8 105.5 L1822 116" stroke="#e6e6e6" stroke-width="1" fill="none"/><ellipse cx="1818" cy="122.3" rx="1.6" ry="2.6" transform="rotate(40 1818 122.3)" fill="none" stroke="#333" stroke-width="1"/><ellipse cx="1830.5" cy="122.3" rx="1.6" ry="2.6" transform="rotate(-40 1830.5 122.3)" fill="none" stroke="#333" stroke-width="1"/><rect x="1849.6" y="98" width="5.6" height="4.1" fill="#0000f8"/><rect x="1848.2" y="103.15" width="8.4" height="4.1" fill="#0000f8"/><rect x="1849.9" y="108.3" width="9" height="4.1" fill="#0000f8"/><rect x="1856.1" y="113.5" width="2.8" height="4.1" fill="#0000f8"/><rect x="1848.4" y="118.8" width="7.7" height="4.1" fill="#0000f8"/><rect x="1867.7" y="97.6" width="10.2" height="25.5" fill="#0000f8"/><path d="M1847.6 96.80 H1860.2 M1866.8 96.80 H1878.8" stroke="#808080" stroke-width="1.1" opacity=".85"/><path d="M1847.6 102.24 H1860.2 M1866.8 102.24 H1878.8" stroke="#808080" stroke-width="1.1" opacity=".85"/><path d="M1847.6 107.68 H1860.2 M1866.8 107.68 H1878.8" stroke="#808080" stroke-width="1.1" opacity=".85"/><path d="M1847.6 113.12 H1860.2 M1866.8 113.12 H1878.8" stroke="#808080" stroke-width="1.1" opacity=".85"/><path d="M1847.6 118.56 H1860.2 M1866.8 118.56 H1878.8" stroke="#808080" stroke-width="1.1" opacity=".85"/><path d="M1847.6 124.00 H1860.2 M1866.8 124.00 H1878.8" stroke="#808080" stroke-width="1.1" opacity=".85"/><path d="M1859.8 110.1 H1865.4" stroke="#555" stroke-width="1.5"/><rect x="1898.5" y="101.5" width="2" height="2" fill="#fff" opacity=".7"/><rect x="1901.5" y="101.5" width="2" height="2" fill="#fff" opacity=".7"/><rect x="1898.5" y="104.5" width="2" height="2" fill="#fff" opacity=".7"/><rect x="1901.5" y="104.5" width="2" height="2" fill="#fff" opacity=".7"/><rect x="1898.5" y="107.5" width="2" height="2" fill="#fff" opacity=".7"/><rect x="1901.5" y="107.5" width="2" height="2" fill="#fff" opacity=".7"/><rect x="1898.5" y="110.5" width="2" height="2" fill="#fff" opacity=".7"/><rect x="1901.5" y="110.5" width="2" height="2" fill="#fff" opacity=".7"/><rect x="1898.5" y="113.5" width="2" height="2" fill="#fff" opacity=".7"/><rect x="1901.5" y="113.5" width="2" height="2" fill="#fff" opacity=".7"/><rect x="1898.5" y="116.5" width="2" height="2" fill="#fff" opacity=".7"/><rect x="1901.5" y="116.5" width="2" height="2" fill="#fff" opacity=".7"/><rect x="1899" y="102" width="1" height="1" fill="#bdbdbd"/><rect x="1902" y="102" width="1" height="1" fill="#bdbdbd"/><rect x="1899" y="105" width="1" height="1" fill="#bdbdbd"/><rect x="1902" y="105" width="1" height="1" fill="#bdbdbd"/><rect x="1899" y="108" width="1" height="1" fill="#bdbdbd"/><rect x="1902" y="108" width="1" height="1" fill="#bdbdbd"/><rect x="1899" y="111" width="1" height="1" fill="#bdbdbd"/><rect x="1902" y="111" width="1" height="1" fill="#bdbdbd"/><rect x="1899" y="114" width="1" height="1" fill="#bdbdbd"/><rect x="1902" y="114" width="1" height="1" fill="#bdbdbd"/><rect x="1899" y="117" width="1" height="1" fill="#bdbdbd"/><rect x="1902" y="117" width="1" height="1" fill="#bdbdbd"/><path d="M1929.4 100.8 L1917 122.5 H1939 L1929.4 100.8" fill="none" stroke="#111" stroke-width="1.3" stroke-linejoin="miter"/><path d="M1928.2 116.3 L1935.0 109.8 V113.0 H1940.8 V119.6 H1935.0 V122.8 Z" fill="url(#gyel)" stroke="#d9b020" stroke-width="0.6"/><path d="M1971.5 100.8 L1959 122.5 H1981 L1971.5 100.8" fill="none" stroke="#111" stroke-width="1.3"/><path d="M1983.6 116.3 L1976.8 109.8 V113.0 H1971.0 V119.6 H1976.8 V122.8 Z" fill="url(#gyel)" stroke="#d9b020" stroke-width="0.6"/><rect x="2006.5" y="101.5" width="2" height="2" fill="#fff" opacity=".7"/><rect x="2009.5" y="101.5" width="2" height="2" fill="#fff" opacity=".7"/><rect x="2006.5" y="104.5" width="2" height="2" fill="#fff" opacity=".7"/><rect x="2009.5" y="104.5" width="2" height="2" fill="#fff" opacity=".7"/><rect x="2006.5" y="107.5" width="2" height="2" fill="#fff" opacity=".7"/><rect x="2009.5" y="107.5" width="2" height="2" fill="#fff" opacity=".7"/><rect x="2006.5" y="110.5" width="2" height="2" fill="#fff" opacity=".7"/><rect x="2009.5" y="110.5" width="2" height="2" fill="#fff" opacity=".7"/><rect x="2006.5" y="113.5" width="2" height="2" fill="#fff" opacity=".7"/><rect x="2009.5" y="113.5" width="2" height="2" fill="#fff" opacity=".7"/><rect x="2006.5" y="116.5" width="2" height="2" fill="#fff" opacity=".7"/><rect x="2009.5" y="116.5" width="2" height="2" fill="#fff" opacity=".7"/><rect x="2007" y="102" width="1" height="1" fill="#bdbdbd"/><rect x="2010" y="102" width="1" height="1" fill="#bdbdbd"/><rect x="2007" y="105" width="1" height="1" fill="#bdbdbd"/><rect x="2010" y="105" width="1" height="1" fill="#bdbdbd"/><rect x="2007" y="108" width="1" height="1" fill="#bdbdbd"/><rect x="2010" y="108" width="1" height="1" fill="#bdbdbd"/><rect x="2007" y="111" width="1" height="1" fill="#bdbdbd"/><rect x="2010" y="111" width="1" height="1" fill="#bdbdbd"/><rect x="2007" y="114" width="1" height="1" fill="#bdbdbd"/><rect x="2010" y="114" width="1" height="1" fill="#bdbdbd"/><rect x="2007" y="117" width="1" height="1" fill="#bdbdbd"/><rect x="2010" y="117" width="1" height="1" fill="#bdbdbd"/><rect x="2022" y="96" width="31" height="31" fill="#ffff88"/><path d="M2026.8 100.2 H2045 V104.3 H2038 V122.3 H2033.5 V104.3 H2026.8 Z" fill="#3a3a3a"/><path d="M2069.5 98.8 H2089.5 Q2093 98.8 2093 102.3 V112.5 Q2093 116 2089.5 116 H2079.5 L2071.4 122.8 L2073.6 116 H2069.5 Q2066 116 2066 112.5 V102.3 Q2066 98.8 2069.5 98.8 Z" fill="#ffff84" stroke="#0a0a0a" stroke-width="1.5" stroke-linejoin="round"/><path d="M2070 103 H2089.3 M2070 107 H2089.3" stroke="#111" stroke-width="2"/><path d="M2070 111 H2078.6" stroke="#111" stroke-width="2"/><path d="M2110.9 100.3 H2129 V102.6 H2121.8 V122 H2117.9 V102.6 H2110.9 Z" fill="#0000ff"/><path d="M2152.8 100.3 H2170.8 V102.6 H2163.7 V122 H2159.8 V102.6 H2152.8 Z" fill="#000"/><path d="M2150.8 112.9 H2177" stroke="#ff4545" stroke-width="1.4"/><path d="M2195.2 110.5 H2206 V112.1 H2201.6 V119.9 H2199.5 V112.1 H2195.2 Z" fill="#ff0000"/><path d="M2207.6 99.4 H2218.5 V101 H2214.1 V108.7 H2212 V101 H2207.6 Z" fill="#0000ff"/><path d="M2206 102.8 Q2201.5 102.6 2199.6 106.2" fill="none" stroke="#777" stroke-width="0.8"/><path d="M2198.4 104.4 L2199.5 107 L2201.8 105.6" fill="none" stroke="#777" stroke-width="0.8"/></svg>
<span class="t" style="left:624.4px;top:97.2px;font:normal normal 10.8px/12px 'Liberation Sans', sans-serif;color:#1e1e1e;letter-spacing:0.398px;-webkit-text-stroke-width:0.2px;">log</span>
<span class="t" style="left:705.7px;top:97.4px;font:normal normal 22.8px/26px 'Liberation Sans', sans-serif;color:#000;letter-spacing:1.136px;-webkit-text-stroke-width:0.25px;">\left(</span>
<span class="t" style="left:841.5px;top:97.4px;font:normal normal 22.8px/26px 'Liberation Sans', sans-serif;color:#000;letter-spacing:1.436px;-webkit-text-stroke-width:0.25px;">\right)</span>
<span class="t" style="left:1042.616px;top:97.4px;font:normal normal 22.8px/26px 'Liberation Sans', sans-serif;color:#000;letter-spacing:1.367px;-webkit-text-stroke-width:0.25px;">section</span>
<span class="t" style="left:1252.718px;top:97.4px;font:normal normal 22.8px/26px 'Liberation Sans', sans-serif;color:#000;letter-spacing:1.614px;-webkit-text-stroke-width:0.25px;">label</span>
<span class="t" style="left:1440.4579999999999px;top:97.4px;font:normal normal 22.8px/26px 'Liberation Sans', sans-serif;color:#000;letter-spacing:1.929px;-webkit-text-stroke-width:0.25px;">tiny</span>
<span class="t" style="left:8.274000000000001px;top:144.8px;font:normal normal 22.8px/26px 'Liberation Sans', sans-serif;color:#000;letter-spacing:1.098px;-webkit-text-stroke-width:0.25px;">Symbols</span>
<svg style="left:388px;top:147px;" width="22" height="22" viewBox="0 0 22 22"><path d="M3.6 3.8 L18.6 18.8 M18.6 3.8 L3.6 18.8" stroke="#000" stroke-width="2.1" fill="none"/></svg>
<div style="left:421px;top:137px;width:1px;height:878px;background:#2b2b2b;"></div>
<svg style="left:0px;top:180px;" width="44" height="392" viewBox="0 180 44 392"><rect x="9.5" y="189.5" width="23" height="23" fill="#fff" stroke="#333" stroke-width="1"/><path d="M13.7 192.5 V209.5" stroke="#333" stroke-width="1.8"/><path d="M16.6 194.6 H28.6" stroke="#333" stroke-width="1.7"/><path d="M16.6 198.9 H28.6" stroke="#333" stroke-width="1.7"/><path d="M16.6 203.2 H28.6" stroke="#333" stroke-width="1.7"/><path d="M16.6 207.5 H28.6" stroke="#333" stroke-width="1.7"/><rect x="9.5" y="221.5" width="23" height="23" fill="#fff" stroke="#333" stroke-width="1"/><path d="M15.5 225.3 H27" stroke="#333" stroke-width="1.7"/><path d="M13.5 229.2 H28.5" stroke="#333" stroke-width="1.7"/><path d="M15.5 233.1 H27" stroke="#333" stroke-width="1.7"/><path d="M13 237.0 H29" stroke="#333" stroke-width="1.7"/><path d="M15.5 240.9 H27" stroke="#333" stroke-width="1.7"/><rect x="9.5" y="253.5" width="23" height="23" fill="#fff" stroke="#333" stroke-width="1"/><path d="M17.5 258 H26 V272 L21.7 268.5 L17.5 272 Z" fill="#4a4a4a"/><path d="M15.5 259.5 L17.5 258 V260" fill="#777"/><rect x="5.5" y="282.5" width="31" height="29" rx="3" fill="#e2e2e2" stroke="#bcbcbc"/><rect x="9.5" y="285.5" width="23" height="23" fill="#fff" stroke="#333" stroke-width="1"/><path d="M21 288.5 V305.5 M13.6 292.7 L28.4 301.3 M28.4 292.7 L13.6 301.3" stroke="#000" stroke-width="1.7"/><rect x="9.5" y="317.5" width="23" height="23" fill="#fff" stroke="#333" stroke-width="1"/><rect x="9.5" y="349.5" width="23" height="23" fill="#fff" stroke="#333" stroke-width="1"/><rect x="9.5" y="381.5" width="23" height="23" fill="#fff" stroke="#333" stroke-width="1"/><rect x="9.5" y="413.5" width="23" height="23" fill="#fff" stroke="#333" stroke-width="1"/><rect x="9.5" y="445.5" width="23" height="23" fill="#fff" stroke="#333" stroke-width="1"/><rect x="9.5" y="477.5" width="23" height="23" fill="#fff" stroke="#333" stroke-width="1"/><rect x="9.5" y="509.5" width="23" height="23" fill="#fff" stroke="#333" stroke-width="1"/><rect x="9.5" y="541.5" width="23" height="23" fill="#fff" stroke="#333" stroke-width="1"/><polygon points="16.70,542.80 17.85,546.03 20.94,544.56 19.47,547.65 22.70,548.80 19.47,549.95 20.94,553.04 17.85,551.57 16.70,554.80 15.55,551.57 12.46,553.04 13.93,549.95 10.70,548.80 13.93,547.65 12.46,544.56 15.55,546.03" fill="#000"/><polygon points="25.40,552.80 26.13,554.84 28.09,553.91 27.16,555.87 29.20,556.60 27.16,557.33 28.09,559.29 26.13,558.36 25.40,560.40 24.67,558.36 22.71,559.29 23.64,557.33 21.60,556.60 23.64,555.87 22.71,553.91 24.67,554.84" fill="#000"/></svg>
<div style="left:10px;top:318px;width:22px;height:22px;overflow:hidden;">
<span class="t" style="left:2.3000000000000007px;top:-0.3999999999999986px;font:normal bold 20px/22px 'Liberation Serif', serif;letter-spacing:-0.20px;color:#222;">([.</span></div>
<div style="left:10px;top:350px;width:22px;height:22px;overflow:hidden;">
<span class="t" style="left:0.5px;top:3.5px;font:normal normal 15.8px/17px 'Liberation Sans', sans-serif;letter-spacing:0.00px;color:#222;">PS</span></div>
<div style="left:10px;top:382px;width:22px;height:22px;overflow:hidden;">
<span class="t" style="left:0.5999999999999996px;top:4.100000000000001px;font:normal normal 14.6px/16px 'Liberation Sans', sans-serif;letter-spacing:0.00px;color:#222;">MP</span></div>
<div style="left:10px;top:414px;width:22px;height:22px;overflow:hidden;">
<span class="t" style="left:3.4000000000000004px;top:1.5px;font:normal normal 19px/21px 'Liberation Sans', sans-serif;letter-spacing:0.00px;color:#222;">TI</span></div>
<div style="left:10px;top:446px;width:22px;height:22px;overflow:hidden;">
<span class="t" style="left:1.9000000000000004px;top:3.6999999999999993px;font:normal normal 14.6px/16px 'Liberation Sans', sans-serif;letter-spacing:0.00px;color:#222;">AS</span></div>
<div style="left:10px;top:478px;width:22px;height:22px;overflow:hidden;">
<span class="t" style="left:0.5999999999999996px;top:6px;font:normal normal 13.7px/15px 'Liberation Sans', sans-serif;letter-spacing:0.00px;color:#222;">BM</span></div>
<div style="left:10px;top:510px;width:22px;height:22px;overflow:hidden;">
<span class="t" style="left:1.5px;top:3.6999999999999993px;font:normal normal 15.8px/17px 'Liberation Sans', sans-serif;letter-spacing:0.00px;color:#222;">XY</span></div>
<span class="t" style="left:58.976px;top:198.5px;font:normal normal 22.8px/26px 'Liberation Sans', sans-serif;color:#000;letter-spacing:1.064px;-webkit-text-stroke-width:0.25px;">Favorites</span>
<div style="left:56px;top:232px;width:352px;height:43px;background:#fff;"></div>
<div style="left:56px;top:233px;width:352px;height:1px;background:#000;"></div>
<svg style="left:220px;top:276px;" width="30" height="3" viewBox="0 0 30 3"><rect x="5" y="1" width="1" height="1" fill="#bdbdbd"/><rect x="8" y="1" width="1" height="1" fill="#bdbdbd"/><rect x="11" y="1" width="1" height="1" fill="#bdbdbd"/><rect x="14" y="1" width="1" height="1" fill="#bdbdbd"/><rect x="17" y="1" width="1" height="1" fill="#bdbdbd"/><rect x="20" y="1" width="1" height="1" fill="#bdbdbd"/></svg>
<span class="t" style="left:58.976px;top:286.5px;font:normal normal 22.8px/26px 'Liberation Sans', sans-serif;color:#000;letter-spacing:0.865px;-webkit-text-stroke-width:0.25px;">Most Used</span>
<div style="left:56px;top:320px;width:332px;height:73px;background:#fff;"></div>
<div style="left:388px;top:320px;width:20px;height:2px;background:#fff;"></div>
<div style="left:56px;top:321px;width:352px;height:1px;background:#000;"></div>
<svg style="left:0px;top:0px;width:0;height:0;" width="1" height="1" viewBox="0 0 1 1"><defs><linearGradient id="sbg" x1="0" y1="0" x2="1" y2="0"><stop offset="0" stop-color="#fdfdfd"/><stop offset="1" stop-color="#ebebeb"/></linearGradient><linearGradient id="sbh" x1="0" y1="0" x2="1" y2="0"><stop offset="0" stop-color="#ececec"/><stop offset="1" stop-color="#dcdcdc"/></linearGradient></defs></svg>
<svg style="left:387px;top:322px;" width="21" height="71" viewBox="0 0 21 71"><rect x="0" y="0" width="21" height="71" fill="url(#sbg)"/><path d="M0.5 0 V71" stroke="#c2c2c2"/><path d="M0.5 21.5 H21 M0.5 50.5 H21" stroke="#c6c6c6"/><path d="M4.8 13.850000000000001 H16.4 L10.6 7.750000000000001 Z" fill="#5c5c5c"/><path d="M4.8 57.35 H16.4 L10.6 63.449999999999996 Z" fill="#5c5c5c"/></svg>
<svg style="left:220px;top:394px;" width="30" height="3" viewBox="0 0 30 3"><rect x="5" y="1" width="1" height="1" fill="#bdbdbd"/><rect x="8" y="1" width="1" height="1" fill="#bdbdbd"/><rect x="11" y="1" width="1" height="1" fill="#bdbdbd"/><rect x="14" y="1" width="1" height="1" fill="#bdbdbd"/><rect x="17" y="1" width="1" height="1" fill="#bdbdbd"/><rect x="20" y="1" width="1" height="1" fill="#bdbdbd"/></svg>
<svg style="left:56px;top:322px;" width="332" height="71" viewBox="56 322 332 71"><text transform="translate(61.60 365.80) scale(0.994 1)" font-family="'Liberation Serif', serif" font-size="40.00" fill="#000">sin</text><text transform="translate(128.20 372.10) scale(1.028 1)" font-family="'Liberation Serif', serif" font-size="45.43" fill="#000">п</text><text transform="translate(183.80 371.94) scale(1.062 1)" font-family="'Liberation Serif', serif" font-style="italic" font-size="46.01" fill="#000">α</text><text transform="translate(229.60 371.79) scale(0.888 1)" font-family="'Liberation Serif', serif" font-size="51.30" fill="#000">Ю</text><text transform="translate(295.50 372.00) scale(1.151 1)" font-family="'Liberation Serif', serif" font-size="44.13" fill="#0c2b45">x</text></svg>
<div style="left:60px;top:401px;width:153px;height:35px;background:#fff;border:1px solid #adadad;border-radius:3px;box-sizing:border-box;"></div>
<span class="t" style="left:62.574px;top:405px;font:normal normal 22.8px/26px 'Liberation Sans', sans-serif;color:#7f7f7f;letter-spacing:0.889px;-webkit-text-stroke-width:0.25px;">Search</span>
<span class="t" style="left:278.96000000000004px;top:405px;font:normal normal 22.8px/26px 'Liberation Sans', sans-serif;color:#000;letter-spacing:0.952px;-webkit-text-stroke-width:0.25px;">Greek</span>
<svg style="left:386px;top:420px;" width="20" height="14" viewBox="0 0 20 14"><path d="M4.1 3.9999999999999996 H15.9 L10 10.2 Z" fill="#555"/></svg>
<div style="left:56px;top:438px;width:332px;height:564px;background:#fff;"></div>
<div style="left:388px;top:438px;width:20px;height:2px;background:#fff;"></div>
<div style="left:56px;top:439px;width:352px;height:1px;background:#000;"></div>
<svg style="left:387px;top:440px;" width="21" height="562" viewBox="0 0 21 562"><rect x="0" y="0" width="21" height="562" fill="url(#sbg)"/><path d="M0.5 0 V562" stroke="#c2c2c2"/><path d="M0.5 21.5 H21" stroke="#c6c6c6"/><rect x="1" y="421" width="20" height="120" fill="url(#sbh)"/><path d="M0.5 421.5 H21 M0.5 540.5 H21" stroke="#c6c6c6"/><path d="M4.8 13.850000000000001 H16.4 L10.6 7.750000000000001 Z" fill="#5c5c5c"/><path d="M4.8 548.1500000000001 H16.4 L10.6 554.25 Z" fill="#5c5c5c"/></svg>
<svg style="left:56px;top:440px;" width="332" height="562" viewBox="56 440 332 562"><text transform="translate(71.20 490.02) scale(1.043 1)" font-family="'Liberation Serif', serif" font-style="italic" font-size="48.08" fill="#0c2b45" stroke="#fff" stroke-width="0.7">α</text><text transform="translate(131.29 481.91) scale(0.980 1)" font-family="'Liberation Serif', serif" font-style="italic" font-size="40.44" fill="#000" stroke="#fff" stroke-width="0.7">β</text><text transform="translate(186.80 482.09) scale(1.211 1)" font-family="'Liberation Serif', serif" font-style="italic" font-size="39.55" fill="#000" stroke="#fff" stroke-width="0.7">γ</text><text transform="translate(243.25 490.01) scale(0.817 1)" font-family="'Liberation Serif', serif" font-style="italic" font-size="48.73" fill="#000" stroke="#fff" stroke-width="0.7">δ</text><text transform="translate(301.10 490.04) scale(0.761 1)" font-family="'Liberation Serif', serif" font-style="italic" font-size="46.25" fill="#000" stroke="#fff" stroke-width="0.7">ϵ</text><text transform="translate(74.90 546.03) scale(1.065 1)" font-family="'Liberation Serif', serif" font-style="italic" font-size="47.08" fill="#000" stroke="#fff" stroke-width="0.7">ε</text><text transform="translate(132.65 539.22) scale(0.836 1)" font-family="'Liberation Serif', serif" font-style="italic" font-size="42.18" fill="#000" stroke="#fff" stroke-width="0.7">ζ</text><text transform="translate(188.15 538.12) scale(0.887 1)" font-family="'Liberation Serif', serif" font-style="italic" font-size="39.41" fill="#000" stroke="#fff" stroke-width="0.7">η</text><text transform="translate(243.25 546.02) scale(0.807 1)" font-family="'Liberation Serif', serif" font-style="italic" font-size="48.31" fill="#000" stroke="#fff" stroke-width="0.7">θ</text><text transform="translate(296.80 546.01) scale(0.922 1)" font-family="'Liberation Serif', serif" font-style="italic" font-size="48.65" fill="#000" stroke="#fff" stroke-width="0.7">ϑ</text><text transform="translate(79.25 602.03) scale(0.847 1)" font-family="'Liberation Serif', serif" font-style="italic" font-size="47.23" fill="#000" stroke="#fff" stroke-width="0.7">ι</text><text transform="translate(129.70 602.50) scale(0.934 1)" font-family="'Liberation Serif', serif" font-style="italic" font-size="48.26" fill="#000" stroke="#fff" stroke-width="0.7">κ</text><text transform="translate(186.91 602.50) scale(0.989 1)" font-family="'Liberation Serif', serif" font-style="italic" font-size="49.08" fill="#000" stroke="#fff" stroke-width="0.7">λ</text><text transform="translate(242.85 594.03) scale(1.010 1)" font-family="'Liberation Serif', serif" font-style="italic" font-size="39.41" fill="#000" stroke="#fff" stroke-width="0.7">μ</text><text transform="translate(297.40 602.03) scale(1.085 1)" font-family="'Liberation Serif', serif" font-style="italic" font-size="47.23" fill="#000" stroke="#fff" stroke-width="0.7">ν</text><text transform="translate(76.35 651.14) scale(0.947 1)" font-family="'Liberation Serif', serif" font-style="italic" font-size="41.48" fill="#000" stroke="#fff" stroke-width="0.7">ξ</text><text transform="translate(131.05 658.04) scale(0.851 1)" font-family="'Liberation Serif', serif" font-style="italic" font-size="45.83" fill="#000" stroke="#fff" stroke-width="0.7">ο</text><text transform="translate(185.05 658.04) scale(0.974 1)" font-family="'Liberation Serif', serif" font-style="italic" font-size="45.96" fill="#000" stroke="#fff" stroke-width="0.7">π</text><text transform="translate(235.20 658.04) scale(1.086 1)" font-family="'Liberation Serif', serif" font-style="italic" font-size="45.96" fill="#000" stroke="#fff" stroke-width="0.7">ϖ</text><text transform="translate(301.40 650.12) scale(0.830 1)" font-family="'Liberation Serif', serif" font-style="italic" font-size="39.41" fill="#000" stroke="#fff" stroke-width="0.7">ρ</text><text transform="translate(76.65 706.08) scale(0.830 1)" font-family="'Liberation Serif', serif" font-style="italic" font-size="38.69" fill="#000" stroke="#fff" stroke-width="0.7">ϱ</text><text transform="translate(129.40 714.08) scale(1.032 1)" font-family="'Liberation Serif', serif" font-style="italic" font-size="42.09" fill="#000" stroke="#fff" stroke-width="0.7">σ</text><text transform="translate(190.00 707.90) scale(0.866 1)" font-family="'Liberation Serif', serif" font-style="italic" font-size="38.29" fill="#000" stroke="#fff" stroke-width="0.7">ς</text><text transform="translate(243.05 714.03) scale(1.068 1)" font-family="'Liberation Serif', serif" font-style="italic" font-size="46.81" fill="#000" stroke="#fff" stroke-width="0.7">τ</text><text transform="translate(297.05 714.04) scale(1.105 1)" font-family="'Liberation Serif', serif" font-style="italic" font-size="46.25" fill="#000" stroke="#fff" stroke-width="0.7">υ</text><text transform="translate(75.35 761.98) scale(0.911 1)" font-family="'Liberation Serif', serif" font-style="italic" font-size="40.11" fill="#000" stroke="#fff" stroke-width="0.7">ϕ</text><text transform="translate(129.40 762.25) scale(1.063 1)" font-family="'Liberation Serif', serif" font-style="italic" font-size="38.83" fill="#000" stroke="#fff" stroke-width="0.7">φ</text><text transform="translate(189.93 762.09) scale(0.914 1)" font-family="'Liberation Serif', serif" font-style="italic" font-size="39.55" fill="#000" stroke="#fff" stroke-width="0.7">χ</text><text transform="translate(240.95 761.01) scale(0.832 1)" font-family="'Liberation Serif', serif" font-style="italic" font-size="44.66" fill="#000" stroke="#fff" stroke-width="0.7">ψ</text><text transform="translate(294.90 770.04) scale(0.860 1)" font-family="'Liberation Serif', serif" font-style="italic" font-size="45.83" fill="#000" stroke="#fff" stroke-width="0.7">ω</text><text transform="translate(71.89 826.50) scale(0.875 1)" font-family="'Liberation Serif', serif" font-style="italic" font-size="52.73" fill="#000" stroke="#fff" stroke-width="0.7">A</text><text transform="translate(125.45 826.37) scale(0.985 1)" font-family="'Liberation Serif', serif" font-style="italic" font-size="51.10" fill="#000" stroke="#fff" stroke-width="0.7">B</text><text transform="translate(184.95 826.50) scale(0.800 1)" font-family="'Liberation Serif', serif" font-size="51.30" fill="#000" stroke="#fff" stroke-width="0.7">Γ</text><text transform="translate(237.81 826.50) scale(0.987 1)" font-family="'Liberation Serif', serif" font-style="italic" font-size="51.30" fill="#000" stroke="#fff" stroke-width="0.7">Γ</text><text transform="translate(291.50 826.50) scale(1.021 1)" font-family="'Liberation Serif', serif" font-size="52.73" fill="#000" stroke="#fff" stroke-width="0.7">Δ</text><text transform="translate(69.53 882.50) scale(1.054 1)" font-family="'Liberation Serif', serif" font-style="italic" font-size="52.42" fill="#000" stroke="#fff" stroke-width="0.7">Δ</text><text transform="translate(124.15 882.50) scale(1.087 1)" font-family="'Liberation Serif', serif" font-style="italic" font-size="51.30" fill="#000" stroke="#fff" stroke-width="0.7">E</text><text transform="translate(181.70 882.50) scale(1.042 1)" font-family="'Liberation Serif', serif" font-style="italic" font-size="51.30" fill="#000" stroke="#fff" stroke-width="0.7">Z</text><text transform="translate(234.12 882.50) scale(0.965 1)" font-family="'Liberation Serif', serif" font-style="italic" font-size="51.30" fill="#000" stroke="#fff" stroke-width="0.7">H</text><text transform="translate(293.70 881.99) scale(0.812 1)" font-family="'Liberation Serif', serif" font-size="51.45" fill="#000" stroke="#fff" stroke-width="0.7">Θ</text><text transform="translate(69.20 937.98) scale(0.835 1)" font-family="'Liberation Serif', serif" font-style="italic" font-size="51.75" fill="#000" stroke="#fff" stroke-width="0.7">Θ</text><text transform="translate(131.50 938.50) scale(0.986 1)" font-family="'Liberation Serif', serif" font-style="italic" font-size="51.30" fill="#000" stroke="#fff" stroke-width="0.7">I</text><text transform="translate(178.22 938.50) scale(1.039 1)" font-family="'Liberation Serif', serif" font-style="italic" font-size="51.30" fill="#000" stroke="#fff" stroke-width="0.7">K</text><text transform="translate(239.05 938.50) scale(0.719 1)" font-family="'Liberation Serif', serif" font-size="52.73" fill="#000" stroke="#fff" stroke-width="0.7">Λ</text><text transform="translate(298.30 938.50) scale(0.759 1)" font-family="'Liberation Serif', serif" font-style="italic" font-size="52.73" fill="#000" stroke="#fff" stroke-width="0.7">Λ</text><text transform="translate(62.40 994.50) scale(1.007 1)" font-family="'Liberation Serif', serif" font-style="italic" font-size="51.30" fill="#000" stroke="#fff" stroke-width="0.7">M</text><text transform="translate(122.05 994.50) scale(1.033 1)" font-family="'Liberation Serif', serif" font-style="italic" font-size="51.30" fill="#000" stroke="#fff" stroke-width="0.7">N</text><text transform="translate(183.20 994.50) scale(0.825 1)" font-family="'Liberation Serif', serif" font-size="51.30" fill="#000" stroke="#fff" stroke-width="0.7">Ξ</text><text transform="translate(235.85 994.50) scale(1.033 1)" font-family="'Liberation Serif', serif" font-style="italic" font-size="51.30" fill="#000" stroke="#fff" stroke-width="0.7">Ξ</text><text transform="translate(293.35 993.99) scale(0.831 1)" font-family="'Liberation Serif', serif" font-style="italic" font-size="51.45" fill="#000" stroke="#fff" stroke-width="0.7">O</text></svg>
<div style="left:422px;top:137px;width:711px;height:47px;background:#efefef;"></div>
<div style="left:466px;top:183px;width:667px;height:1px;background:#c2c2c2;"></div>
<div style="left:466px;top:184px;width:667px;height:1px;background:#f7f7f7;"></div>
<div style="left:466px;top:137px;width:309px;height:48px;background:linear-gradient(#ffffff,#fbfbfb);border:1px solid #bcbcbc;border-bottom:none;border-radius:4px 4px 0 0;box-sizing:border-box;"></div>
<span class="t" style="left:499.38800000000003px;top:147.6px;font:normal normal 22.8px/26px 'Liberation Sans', sans-serif;color:#000;letter-spacing:1.294px;-webkit-text-stroke-width:0.25px;">getting_started.tex</span>
<svg style="left:728px;top:149px;" width="26" height="26" viewBox="0 0 26 26"><path d="M3.5 3 L22.5 22 M22.5 3 L3.5 22" stroke="#000" stroke-width="2.2" fill="none"/></svg>
<svg style="left:430px;top:145px;" width="28" height="56" viewBox="0 0 28 56"><defs><linearGradient id="ya" x1="0" y1="0" x2="0" y2="1"><stop offset="0" stop-color="#fbdc55"/><stop offset="1" stop-color="#f2c93a"/></linearGradient></defs><ellipse cx="14.5" cy="21.2" rx="7.5" ry="1.8" fill="#000" opacity=".2" filter="url(#bl)"/><path d="M4.8 13 L14.8 4.2 V8.6 H21.6 Q22.2 8.6 22.2 9.2 V16.8 Q22.2 17.4 21.6 17.4 H14.8 V21.8 Z" fill="url(#ya)" stroke="#e3b92c" stroke-width="0.7" stroke-linejoin="round"/><path d="M23.2 45 L13.2 36.2 V40.6 H6.4 Q5.8 40.6 5.8 41.2 V48.8 Q5.8 49.4 6.4 49.4 H13.2 V53.8 Z" fill="#dadada" stroke="#d0d0d0" stroke-width="0.7" stroke-linejoin="round"/></svg>
<div style="left:501px;top:185px;width:632px;height:505.5px;background:#fff;"></div>
<div style="left:498px;top:185px;width:2.3px;height:323.5px;background:#3bb300;"></div>
<div style="left:501px;top:428.3px;width:632px;height:26.4px;background:#ececf9;"></div>
<svg style="left:480px;top:350px;" width="20" height="70" viewBox="480 350 20 70"><path d="M486.2 358.1 H495 L490.6 362.6 Z" fill="#8d8d8d"/><path d="M486.2 385.2 H495 L490.6 389.7 Z" fill="#8d8d8d"/><path d="M486.2 412.1 H495 L490.6 416.6 Z" fill="#8d8d8d"/></svg>
<div style="left:986px;top:429.5px;width:2px;height:24.5px;background:#000;"></div>
<span class="t code" style="left:506px;top:186.6px;font:22.5px/26px 'Liberation Mono', monospace;letter-spacing:-0.502px;-webkit-text-stroke-width:0.3px;"><span style="color:#800000">\documentclass</span><span style="color:#000">[10pt,a4paper]{</span><span style="color:#008000">article</span><span style="color:#000">}</span></span>
<span class="t code" style="left:506px;top:213.6px;font:22.5px/26px 'Liberation Mono', monospace;letter-spacing:-0.502px;-webkit-text-stroke-width:0.3px;"><span style="color:#800000">\usepackage</span><span style="color:#000">[utf8]{</span><span style="color:#008000">inputenc</span><span style="color:#000">}</span></span>
<span class="t code" style="left:506px;top:240.6px;font:22.5px/26px 'Liberation Mono', monospace;letter-spacing:-0.502px;-webkit-text-stroke-width:0.3px;"><span style="color:#800000">\usepackage</span><span style="color:#000">[T1]{</span><span style="color:#008000">fontenc</span><span style="color:#000">}</span></span>
<span class="t code" style="left:506px;top:267.6px;font:22.5px/26px 'Liberation Mono', monospace;letter-spacing:-0.502px;-webkit-text-stroke-width:0.3px;"><span style="color:#800000">\usepackage</span><span style="color:#000">{</span><span style="color:#008000">amsmath</span><span style="color:#000">}</span></span>
<span class="t code" style="left:506px;top:294.6px;font:22.5px/26px 'Liberation Mono', monospace;letter-spacing:-0.502px;-webkit-text-stroke-width:0.3px;"><span style="color:#800000">\usepackage</span><span style="color:#000">{</span><span style="color:#008000">amssymb</span><span style="color:#000">}</span></span>
<span class="t code" style="left:506px;top:321.6px;font:22.5px/26px 'Liberation Mono', monospace;letter-spacing:-0.502px;-webkit-text-stroke-width:0.3px;"><span style="color:#800000">\usepackage</span><span style="color:#000">{</span><span style="color:#008000">graphicx</span><span style="color:#000">}</span></span>
<span class="t code" style="left:506px;top:348.6px;font:22.5px/26px 'Liberation Mono', monospace;letter-spacing:-0.502px;-webkit-text-stroke-width:0.3px;"><span style="color:#0095ff;-webkit-text-stroke-width:0.6px">\begin{</span><span style="color:#000080;font-weight:bold">document</span><span style="color:#0095ff;-webkit-text-stroke-width:0.6px">}</span></span>
<span class="t code" style="left:506px;top:375.6px;font:22.5px/26px 'Liberation Mono', monospace;letter-spacing:-0.502px;-webkit-text-stroke-width:0.3px;"><span style="color:#0095ff;-webkit-text-stroke-width:0.6px">\section</span><span style="color:#000">{</span><span style="color:#000;font-weight:bold">First section</span><span style="color:#000">}</span></span>
<span class="t code" style="left:506px;top:402.6px;font:22.5px/26px 'Liberation Mono', monospace;letter-spacing:-0.502px;-webkit-text-stroke-width:0.3px;"><span style="color:#0095ff;-webkit-text-stroke-width:0.6px">\begin{</span><span style="color:#000080;font-weight:bold">equation</span><span style="color:#0095ff;-webkit-text-stroke-width:0.6px">}</span><span style="color:#808044">\label</span><span style="color:#008000">{eqn:unityCircle}</span></span>
<span class="t code" style="left:506px;top:429.6px;font:22.5px/26px 'Liberation Mono', monospace;letter-spacing:-0.502px;-webkit-text-stroke-width:0.3px;"><span style="color:#000">    </span><span style="color:#808000">\sin</span><span style="color:#008000">^2 </span><span style="color:#808000">\alpha</span><span style="color:#008000"> + </span><span style="color:#808000">\cos</span><span style="color:#008000">^2 </span><span style="color:#808000">\alpha</span><span style="color:#008000"> = 1</span></span>
<span class="t code" style="left:506px;top:456.6px;font:22.5px/26px 'Liberation Mono', monospace;letter-spacing:-0.502px;-webkit-text-stroke-width:0.3px;"><span style="color:#0095ff;-webkit-text-stroke-width:0.6px">\end{</span><span style="color:#000080;font-weight:bold">equation</span><span style="color:#0095ff;-webkit-text-stroke-width:0.6px">}</span></span>
<span class="t code" style="left:506px;top:483.6px;font:22.5px/26px 'Liberation Mono', monospace;letter-spacing:-0.502px;-webkit-text-stroke-width:0.3px;"><span style="color:#0095ff;-webkit-text-stroke-width:0.6px">\end{</span><span style="color:#000080;font-weight:bold">document</span><span style="color:#0095ff;-webkit-text-stroke-width:0.6px">}</span></span>
<svg style="left:422px;top:200px;" width="46" height="460" viewBox="422 200 46 460"><path d="M434 211.5 H454" stroke="#d9d9d9" stroke-width="1"/><path d="M434 212.5 H454" stroke="#fafafa" stroke-width="1"/><rect x="432.5" y="220.5" width="23" height="23" fill="#fff" stroke="#3c3c3c" stroke-width="1"/><rect x="432.5" y="252.5" width="23" height="23" fill="#fff" stroke="#3c3c3c" stroke-width="1"/><rect x="432.5" y="284.5" width="23" height="23" fill="#fff" stroke="#3c3c3c" stroke-width="1"/><path d="M439.5 303.3 H448.5" stroke="#000" stroke-width="1.2"/><rect x="433.8" y="316.5" width="20.4" height="22.6" rx="1.5" fill="#f6f6f6" stroke="#d2d2d2"/><path d="M434.3 339.4 H453.7" stroke="#bdbdbd"/><path d="M436.3 320.9 h14" stroke="#333" stroke-width="0.95"/><path d="M436.3 324.1 h13" stroke="#333" stroke-width="0.95"/><path d="M436.3 327.4 h14" stroke="#333" stroke-width="0.95"/><path d="M436.3 330.6 h13" stroke="#333" stroke-width="0.95"/><path d="M436.3 333.9 h9" stroke="#333" stroke-width="0.95"/><rect x="433.8" y="348.5" width="20.4" height="22.6" rx="1.5" fill="#f6f6f6" stroke="#d2d2d2"/><path d="M434.3 371.4 H453.7" stroke="#bdbdbd"/><path d="M437.4 352.9 h13.5" stroke="#333" stroke-width="0.95"/><path d="M438.7 356.1 h11" stroke="#333" stroke-width="0.95"/><path d="M437.4 359.4 h13.5" stroke="#333" stroke-width="0.95"/><path d="M438.7 362.6 h11" stroke="#333" stroke-width="0.95"/><path d="M440.4 365.9 h7.5" stroke="#333" stroke-width="0.95"/><rect x="433.8" y="380.5" width="20.4" height="22.6" rx="1.5" fill="#f6f6f6" stroke="#d2d2d2"/><path d="M434.3 403.4 H453.7" stroke="#bdbdbd"/><path d="M437.7 384.9 h13.5" stroke="#333" stroke-width="0.95"/><path d="M439.7 388.1 h11.5" stroke="#333" stroke-width="0.95"/><path d="M437.7 391.4 h13.5" stroke="#333" stroke-width="0.95"/><path d="M440.7 394.6 h10.5" stroke="#333" stroke-width="0.95"/><path d="M442.7 397.9 h8.5" stroke="#333" stroke-width="0.95"/><path d="M434 413 H454" stroke="#d9d9d9" stroke-width="1"/><path d="M434 414 H454" stroke="#fafafa" stroke-width="1"/><path d="M452.6 425 V438.3 H440.5" fill="none" stroke="#000" stroke-width="1.8"/><path d="M435.4 438.3 L442 433.4 V443.2 Z" fill="#000"/><path d="M434 455 H454" stroke="#d9d9d9" stroke-width="1"/><path d="M434 456 H454" stroke="#fafafa" stroke-width="1"/><rect x="445.2" y="509.5" width="9.3" height="9.3" fill="none" stroke="#4a9a12" stroke-width="1"/><rect x="444.2" y="529.8" width="10.3" height="10.3" fill="none" stroke="#4a9a12" stroke-width="1"/><path d="M439.5 570.6 H448.5" stroke="#4a9a12" stroke-width="0.9"/><path d="M433.8 602.2 H455.3" stroke="#4a9a12" stroke-width="1.2"/><path d="M433.5 637 L435.5 635.6 L438.4 643.8 L441.6 626.5 H453" fill="none" stroke="#4a9a12" stroke-width="1.3"/><path d="M440.5 482.4 H447.5" stroke="#4a9a12" stroke-width="1" stroke-dasharray="1 1"/></svg>
<span class="t" style="left:436.2px;top:218.3px;font:normal normal 25px/27px 'Liberation Serif', serif;color:#000;">B</span>
<span class="t" style="left:439.2px;top:250.2px;font:italic normal 25px/27px 'Liberation Serif', serif;color:#000;">I</span>
<span class="t" style="left:437.2px;top:285px;font:normal normal 19px/21px 'Liberation Sans', sans-serif;color:#000;">U</span>
<span class="t" style="left:432.8px;top:466px;font:normal bold 17.5px/20px 'Liberation Sans', sans-serif;color:#3f8f08;letter-spacing:1.466px;">$$</span>
<span class="t" style="left:432.2px;top:488.6px;font:italic normal 24px/26px 'Liberation Serif', serif;color:#000;">x</span>
<span class="t" style="left:431.4px;top:529.2px;font:italic normal 24px/26px 'Liberation Serif', serif;color:#000;">x</span>
<span class="t" style="left:440.2px;top:556.4px;font:italic bold 12.5px/14px 'Liberation Serif', serif;color:#000;">x</span>
<span class="t" style="left:440.0px;top:568px;font:italic bold 12.5px/14px 'Liberation Serif', serif;color:#000;">y</span>
<span class="t" style="left:440.6px;top:585px;font:italic bold 17px/19px 'Liberation Serif', serif;color:#000;">x</span>
<span class="t" style="left:440.6px;top:595.6px;font:italic bold 17px/19px 'Liberation Serif', serif;color:#000;">y</span>
<span class="t" style="left:441.8px;top:623px;font:italic normal 24px/26px 'Liberation Serif', serif;color:#000;">x</span>
<span class="t" style="left:474.676px;top:694px;font:normal normal 22.8px/26px 'Liberation Sans', sans-serif;color:#000;letter-spacing:1.222px;-webkit-text-stroke-width:0.25px;">Line: 10</span>
<span class="t" style="left:591.36px;top:694px;font:normal normal 22.8px/26px 'Liberation Sans', sans-serif;color:#000;letter-spacing:1.195px;-webkit-text-stroke-width:0.25px;">Column: 37</span>
<span class="t" style="left:783.848px;top:694px;font:normal normal 22.8px/26px 'Liberation Sans', sans-serif;color:#000;letter-spacing:-0.402px;-webkit-text-stroke-width:0.25px;">INSERT</span>
<div style="left:422px;top:721px;width:711px;height:1px;background:#303030;"></div>
<div style="left:1133.3px;top:137px;width:1.2px;height:878px;background:#2b2b2b;"></div>
<div style="left:422.5px;top:772px;width:710.8px;height:11.2px;background:#f6f6f6;"></div>
<div style="left:422.5px;top:783.2px;width:710.8px;height:26.3px;background:#e8e8e8;"></div>
<div style="left:422.5px;top:809.5px;width:710.8px;height:205px;background:#fff;"></div>
<div style="left:572.5px;top:730px;width:76.5px;height:41.5px;background:linear-gradient(#dfdfdf,#dbdbdb);border:1px solid #c4c4c4;border-bottom:1px solid #c9c9c9;border-radius:3px 3px 0 0;box-sizing:border-box;"></div>
<div style="left:648px;top:730px;width:124.5px;height:41.5px;background:linear-gradient(#dfdfdf,#dbdbdb);border:1px solid #c4c4c4;border-bottom:1px solid #c9c9c9;border-radius:3px 3px 0 0;box-sizing:border-box;"></div>
<div style="left:771.5px;top:730px;width:134.70000000000005px;height:41.5px;background:linear-gradient(#dfdfdf,#dbdbdb);border:1px solid #c4c4c4;border-bottom:1px solid #c9c9c9;border-radius:3px 3px 0 0;box-sizing:border-box;"></div>
<div style="left:905.2px;top:730px;width:142.79999999999995px;height:41.5px;background:linear-gradient(#dfdfdf,#dbdbdb);border:1px solid #c4c4c4;border-bottom:1px solid #c9c9c9;border-radius:3px 3px 0 0;box-sizing:border-box;"></div>
<span class="t" style="left:588.976px;top:737.6px;font:normal normal 22.8px/26px 'Liberation Sans', sans-serif;color:#000;letter-spacing:1.772px;-webkit-text-stroke-width:0.25px;">Log</span>
<span class="t" style="left:665.176px;top:737.6px;font:normal normal 22.8px/26px 'Liberation Sans', sans-serif;color:#000;letter-spacing:0.909px;-webkit-text-stroke-width:0.25px;">Preview</span>
<span class="t" style="left:788.544px;top:737.6px;font:normal normal 22.8px/26px 'Liberation Sans', sans-serif;color:#000;letter-spacing:1.710px;-webkit-text-stroke-width:0.25px;">Terminal</span>
<div style="left:923.7px;top:735px;width:122.79999999999995px;height:34px;overflow:hidden;">
<span class="t" style="left:0;top:2.5px;font:23px/26px 'Liberation Sans', sans-serif;letter-spacing:0.169px;">Search Res</span></div>
<div style="left:428px;top:728px;width:145px;height:45px;background:linear-gradient(#f6f6f6,#efefef);border:1px solid #bdbdbd;border-bottom:none;border-radius:4px 4px 0 0;box-sizing:border-box;"></div>
<span class="t" style="left:445.176px;top:736.8px;font:normal normal 22.8px/26px 'Liberation Sans', sans-serif;color:#000;letter-spacing:0.708px;-webkit-text-stroke-width:0.25px;">Messages</span>
<div style="left:1046.4px;top:728.2px;width:23px;height:44.4px;background:linear-gradient(#ffffff,#f1f1f1);border:1px solid #c6c6c6;border-radius:3px;box-sizing:border-box;"></div>
<div style="left:1069.6px;top:728.2px;width:23px;height:44.4px;background:linear-gradient(#ffffff,#f1f1f1);border:1px solid #c0c0c0;border-radius:3px;box-sizing:border-box;"></div>
<svg style="left:1046px;top:728px;" width="47" height="46" viewBox="0 0 47 46"><path d="M15 16.8 V27.8 L9.2 22.3 Z" fill="#cdcdcd"/><path d="M32 16.8 V27.8 L37.8 22.3 Z" fill="#4a4a4a"/></svg>
<svg style="left:1099px;top:739px;" width="24" height="24" viewBox="0 0 24 24"><path d="M4 3.6 L19.8 19.2 M19.8 3.6 L4 19.2" stroke="#000" stroke-width="2.1" fill="none"/></svg>
<div style="left:1134.5px;top:137px;width:1132.5px;height:53.5px;background:linear-gradient(#f9f9f9,#ececec);"></div>
<div style="left:1134.5px;top:190px;width:1132.5px;height:1.2px;background:#bcbcbc;"></div>
<div style="left:1134.5px;top:191.2px;width:1113px;height:775.8px;background:#fff;"></div>
<svg style="left:2247px;top:191px;" width="20" height="776" viewBox="0 0 20 776"><rect x="0" y="0" width="20" height="776" fill="url(#sbg)"/><path d="M0.5 0 V776" stroke="#c2c2c2"/><path d="M0.5 23.5 H20 M0.5 752.5 H20" stroke="#c8c8c8"/><rect x="1" y="383" width="19" height="372" fill="#e4e4e4"/><path d="M0.5 383.5 H20 M0.5 755.5 H20" stroke="#bcbcbc"/><path d="M4.8 13.649999999999999 H16.4 L10.6 7.55 Z" fill="#5c5c5c"/><path d="M4.8 762.1500000000001 H16.4 L10.6 768.25 Z" fill="#5c5c5c"/></svg>
<svg style="left:1134px;top:137px;" width="1133" height="54" viewBox="1134 137 1133 54"><rect x="1142.5" y="155.5" width="2" height="2" fill="#fff" opacity=".7"/><rect x="1145.5" y="155.5" width="2" height="2" fill="#fff" opacity=".7"/><rect x="1142.5" y="158.5" width="2" height="2" fill="#fff" opacity=".7"/><rect x="1145.5" y="158.5" width="2" height="2" fill="#fff" opacity=".7"/><rect x="1142.5" y="161.5" width="2" height="2" fill="#fff" opacity=".7"/><rect x="1145.5" y="161.5" width="2" height="2" fill="#fff" opacity=".7"/><rect x="1142.5" y="164.5" width="2" height="2" fill="#fff" opacity=".7"/><rect x="1145.5" y="164.5" width="2" height="2" fill="#fff" opacity=".7"/><rect x="1142.5" y="167.5" width="2" height="2" fill="#fff" opacity=".7"/><rect x="1145.5" y="167.5" width="2" height="2" fill="#fff" opacity=".7"/><rect x="1142.5" y="170.5" width="2" height="2" fill="#fff" opacity=".7"/><rect x="1145.5" y="170.5" width="2" height="2" fill="#fff" opacity=".7"/><rect x="1143" y="156" width="1" height="1" fill="#bdbdbd"/><rect x="1146" y="156" width="1" height="1" fill="#bdbdbd"/><rect x="1143" y="159" width="1" height="1" fill="#bdbdbd"/><rect x="1146" y="159" width="1" height="1" fill="#bdbdbd"/><rect x="1143" y="162" width="1" height="1" fill="#bdbdbd"/><rect x="1146" y="162" width="1" height="1" fill="#bdbdbd"/><rect x="1143" y="165" width="1" height="1" fill="#bdbdbd"/><rect x="1146" y="165" width="1" height="1" fill="#bdbdbd"/><rect x="1143" y="168" width="1" height="1" fill="#bdbdbd"/><rect x="1146" y="168" width="1" height="1" fill="#bdbdbd"/><rect x="1143" y="171" width="1" height="1" fill="#bdbdbd"/><rect x="1146" y="171" width="1" height="1" fill="#bdbdbd"/><path d="M1157.5 149 V180" stroke="#cfcfcf" stroke-width="1"/><path d="M1158.5 149 V180" stroke="#fbfbfb" stroke-width="1"/><defs><linearGradient id="bk" x1="0" y1="0" x2="0" y2="1"><stop offset="0" stop-color="#d80b0b"/><stop offset="1" stop-color="#9c0505"/></linearGradient></defs><path d="M1172 149.5 L1195.5 146.2 Q1196.6 146.1 1196.8 147.2 L1200.3 175.2 Q1200.4 176.2 1199.4 176.4 L1176 180.6 Q1175 180.8 1174.8 179.8 Z" fill="#1a1a1a"/><path d="M1176.6 148.9 L1195.5 146.3 Q1196.6 146.2 1196.8 147.2 L1200.1 173.8 L1180.5 177.6 Z" fill="url(#bk)"/><path d="M1176.3 179.3 L1200.2 175 " stroke="#e8e8e8" stroke-width="1.3"/><path d="M1182.5 148.5 Q1187 158 1197.5 164.5 M1188 147.5 Q1187 163 1181 174 M1181.5 170.5 Q1190 165 1198.5 161.5" fill="none" stroke="#f0b0b0" stroke-width="0.9" opacity=".85"/><path d="M1212.5 149 V180" stroke="#cfcfcf" stroke-width="1"/><path d="M1213.5 149 V180" stroke="#fbfbfb" stroke-width="1"/><circle cx="1235.4" cy="159.4" r="10.4" fill="none" stroke="#1a1a1a" stroke-width="3"/><path d="M1243 167.2 L1255.2 179.4" stroke="#1a1a1a" stroke-width="3.4"/><path d="M1277.8 170 V150 Q1277.8 147.6 1280 147.6 Q1282.2 147.6 1282.2 150 V160 V148.4 Q1282.2 146 1284.4 146 Q1286.7 146 1286.7 148.4 V160 V150.2 Q1286.7 147.9 1288.9 147.9 Q1291.1 147.9 1291.1 150.2 V161 V153.3 Q1291.1 151.2 1293.2 151.2 Q1295.3 151.2 1295.3 153.3 V169 Q1295.3 177 1289.5 180.3 H1280.5 Q1275.3 177.5 1273.2 170 V164 Q1273.2 161.6 1275.4 161.6 Q1277.8 161.6 1277.8 164 Z" fill="#fff" stroke="#111" stroke-width="1.7" stroke-linejoin="round"/><path d="M1280.5 181.2 H1289.5" stroke="#f1f1f1" stroke-width="2.4"/><path d="M1312.5 149 V180" stroke="#cfcfcf" stroke-width="1"/><path d="M1313.5 149 V180" stroke="#fbfbfb" stroke-width="1"/><defs><linearGradient id="agl" x1="0" y1="0" x2="0" y2="1"><stop offset="0" stop-color="#e4e4e4"/><stop offset=".5" stop-color="#dadada"/><stop offset=".52" stop-color="#d2d2d2"/><stop offset="1" stop-color="#d6d6d6"/></linearGradient><linearGradient id="agd" x1="0" y1="0" x2="0" y2="1"><stop offset="0" stop-color="#bdbdbd"/><stop offset=".5" stop-color="#b2b2b2"/><stop offset=".52" stop-color="#a6a6a6"/><stop offset="1" stop-color="#adadad"/></linearGradient></defs><ellipse cx="1339" cy="176.6" rx="11" ry="2.4" fill="#000" opacity="0.1" filter="url(#bl)"/><path d="M1326.3 164 L1339.3 151 V157.5 H1351.3 V170.5 H1339.3 V177 Z" fill="url(#agl)" stroke="#cdcdcd" stroke-width="0.8" stroke-linejoin="round"/><ellipse cx="1386" cy="176.6" rx="11" ry="2.4" fill="#000" opacity="0.1" filter="url(#bl)"/><path d="M1398 164 L1385 151 V157.5 H1373 V170.5 H1385 V177 Z" fill="url(#agl)" stroke="#cdcdcd" stroke-width="0.8" stroke-linejoin="round"/><path d="M1412.5 149 V180" stroke="#cfcfcf" stroke-width="1"/><path d="M1413.5 149 V180" stroke="#fbfbfb" stroke-width="1"/><ellipse cx="1438" cy="176.6" rx="11" ry="2.4" fill="#000" opacity="0.16" filter="url(#bl)"/><rect x="1423.2" y="150.5" width="5.4" height="26.5" rx="1" fill="url(#agd)" stroke="#a2a2a2" stroke-width="0.7"/><path d="M1428.6 164 L1441.6 151 V157.5 H1452.0 V170.5 H1441.6 V177 Z" fill="url(#agd)" stroke="#a2a2a2" stroke-width="0.8" stroke-linejoin="round"/><ellipse cx="1485" cy="176.6" rx="11" ry="2.4" fill="#000" opacity="0.16" filter="url(#bl)"/><path d="M1472 164 L1485 151 V157.5 H1497 V170.5 H1485 V177 Z" fill="url(#agd)" stroke="#a2a2a2" stroke-width="0.8" stroke-linejoin="round"/><ellipse cx="1613" cy="176.6" rx="11" ry="2.4" fill="#000" opacity="0.16" filter="url(#bl)"/><path d="M1625.8 164 L1612.8 151 V157.5 H1600.8 V170.5 H1612.8 V177 Z" fill="url(#agd)" stroke="#a2a2a2" stroke-width="0.8" stroke-linejoin="round"/><ellipse cx="1660" cy="176.6" rx="11" ry="2.4" fill="#000" opacity="0.16" filter="url(#bl)"/><path d="M1669.1000000000001 164 L1656.1000000000001 151 V157.5 H1645.7 V170.5 H1656.1000000000001 V177 Z" fill="url(#agd)" stroke="#a2a2a2" stroke-width="0.8" stroke-linejoin="round"/><rect x="1669.1" y="150.5" width="5.4" height="26.5" rx="1" fill="url(#agd)" stroke="#a2a2a2" stroke-width="0.7"/><path d="M1685.5 149 V180" stroke="#cfcfcf" stroke-width="1"/><path d="M1686.5 149 V180" stroke="#fbfbfb" stroke-width="1"/><rect x="1508.5" y="149.5" width="34" height="29" rx="4" fill="#fff" stroke="#b7b7b7"/><rect x="1736.5" y="143.5" width="43" height="42" rx="4" fill="#dcdcdc" stroke="#b0b0b0"/><path d="M1699.5 148.5 H1727.0 V170 L1717.0 180 H1699.5 Z" fill="url(#gpage)" stroke="#9c9c9c" stroke-width="1"/><path d="M1727.0 170 Q1721.0 170.4 1717.8 171.3 Q1718.1 175 1717.0 180 Z" fill="#fdfdfd" stroke="#a6a6a6" stroke-width="0.8"/><path d="M1744.5 148.5 H1772.0 V170 L1762.0 180 H1744.5 Z" fill="url(#gpage)" stroke="#9c9c9c" stroke-width="1"/><path d="M1772.0 170 Q1766.0 170.4 1762.8 171.3 Q1763.1 175 1762.0 180 Z" fill="#fdfdfd" stroke="#a6a6a6" stroke-width="0.8"/><path d="M1789.3 148.5 H1816.8 V170 L1806.8 180 H1789.3 Z" fill="url(#gpage)" stroke="#9c9c9c" stroke-width="1"/><path d="M1816.8 170 Q1810.8 170.4 1807.6 171.3 Q1807.8999999999999 175 1806.8 180 Z" fill="#fdfdfd" stroke="#a6a6a6" stroke-width="0.8"/><path d="M1834.3 148.5 H1861.8 V170 L1851.8 180 H1834.3 Z" fill="url(#gpage)" stroke="#9c9c9c" stroke-width="1"/><path d="M1861.8 170 Q1855.8 170.4 1852.6 171.3 Q1852.8999999999999 175 1851.8 180 Z" fill="#fdfdfd" stroke="#a6a6a6" stroke-width="0.8"/><path d="M1747.5 152.3 H1769.5" stroke="#2a7fff" stroke-width="0.9"/><path d="M1747.5 152.3 l3 -1.5 v3 Z M1769.5 152.3 l-3 -1.5 v3 Z" fill="#2a7fff"/><rect x="1756.6" y="150.5" width="3.6" height="3.8" rx="0.8" fill="#f4f4f4" stroke="#aaa" stroke-width="0.7"/><path d="M1792 152.3 H1809.5" stroke="#2a7fff" stroke-width="0.9"/><path d="M1792 152.3 l3 -1.5 v3 Z M1809.5 152.3 l-3 -1.5 v3 Z" fill="#2a7fff"/><rect x="1798.8" y="150.5" width="3.6" height="3.8" rx="0.8" fill="#f4f4f4" stroke="#aaa" stroke-width="0.7"/><path d="M1791.3 157.2 H1810 M1791.3 160.4 H1810 M1791.3 163.6 H1804" stroke="#7c7c7c" stroke-width="1.5"/><path d="M1841 152.3 H1859.5" stroke="#2a7fff" stroke-width="0.8" opacity=".8"/><path d="M1859.8 152.3 l-3 -1.4 v2.8 Z" fill="#2a7fff"/><path d="M1838.6 155 V176.5" stroke="#2a7fff" stroke-width="0.8" opacity=".85"/><path d="M1838.6 177.6 l-1.4 -3.2 h2.8 Z" fill="#2a7fff"/><rect x="1836.8" y="150.5" width="3.6" height="3.8" rx="0.8" fill="#f4f4f4" stroke="#aaa" stroke-width="0.7"/><path d="M1875.5 149 V180" stroke="#cfcfcf" stroke-width="1"/><path d="M1876.5 149 V180" stroke="#fbfbfb" stroke-width="1"/><path d="M2090.2 153.9 H2119.9 M2090.2 174.2 H2119.9" stroke="#000" stroke-width="2.4" stroke-linecap="round"/><rect x="2135.3" y="154.1" width="29.5" height="19.8" fill="none" stroke="#1c1c1c" stroke-width="2.3"/><path d="M2138.8 164 L2146 156.2 V172 Z" fill="#1c1c1c"/><path d="M2185 150.5 H2206 V156 H2203.7 V152.8 H2181.6 V168.4 H2185 V170.7 H2179.3 V150.5 Z" fill="#1c1c1c"/><rect x="2185.2" y="156.2" width="24.5" height="17.7" fill="none" stroke="#1c1c1c" stroke-width="2.3"/><path d="M2228.8 152.8 L2251.3 175.5 M2251.3 152.8 L2228.8 175.5" stroke="#000" stroke-width="2.7"/></svg>
<span class="t" style="left:1524.69px;top:149.5px;font:normal normal 22.8px/26px 'Liberation Sans', sans-serif;color:#000;-webkit-text-stroke-width:0.25px;">1</span>
<span class="t" style="left:1546.088px;top:149.5px;font:normal normal 22.8px/26px 'Liberation Sans', sans-serif;color:#000;letter-spacing:1.725px;-webkit-text-stroke-width:0.25px;">of 1</span>
<span class="t" style="left:1702.2px;top:149.3px;font:normal normal 8.6px/10px 'Liberation Sans', sans-serif;color:#222;letter-spacing:-0.096px;-webkit-text-stroke:0.25px #222;">100%</span>
<span class="t" style="left:1367.6px;top:420.2px;font:normal bold 27.6px/31px 'Liberation Serif', serif;color:#000;">1</span>
<span class="t" style="left:1411.5px;top:420.2px;font:normal bold 28.6px/31px 'Liberation Serif', serif;color:#000;letter-spacing:0.453px;">First</span>
<span class="t" style="left:1483.4px;top:420.2px;font:normal bold 28.6px/31px 'Liberation Serif', serif;color:#000;letter-spacing:0.592px;">section</span>
<span class="t" style="left:1612.2px;top:469.5px;font:normal normal 19.6px/21px 'Liberation Serif', serif;color:#1a1a1a;letter-spacing:-0.086px;">sin</span>
<span class="t" style="left:1635.8px;top:467.6px;font:normal normal 13.6px/15px 'Liberation Serif', serif;color:#1a1a1a;">2</span>
<span class="t" style="left:1647.6px;top:468.5px;font:italic normal 20.6px/22px 'Liberation Serif', serif;color:#1a1a1a;">α</span>
<span class="t" style="left:1664.4px;top:466.5px;font:normal normal 22.0px/25px 'Liberation Serif', serif;color:#1a1a1a;">+</span>
<span class="t" style="left:1682px;top:469.5px;font:normal normal 19.6px/21px 'Liberation Serif', serif;color:#1a1a1a;letter-spacing:-0.175px;">cos</span>
<span class="t" style="left:1707.8px;top:467.6px;font:normal normal 13.6px/15px 'Liberation Serif', serif;color:#1a1a1a;">2</span>
<span class="t" style="left:1718.4px;top:468.5px;font:italic normal 20.6px/22px 'Liberation Serif', serif;color:#1a1a1a;">α</span>
<span class="t" style="left:1735.8px;top:466.5px;font:normal normal 22.0px/25px 'Liberation Serif', serif;color:#1a1a1a;">=</span>
<span class="t" style="left:1754px;top:469.5px;font:normal normal 19.6px/21px 'Liberation Serif', serif;color:#1a1a1a;">1</span>
<span class="t" style="left:1986.4px;top:469.5px;font:normal normal 19.6px/21px 'Liberation Serif', serif;color:#1a1a1a;letter-spacing:-0.086px;">(1)</span>
<div style="left:1134.5px;top:967px;width:1132.5px;height:48px;background:#efefef;"></div>
<div style="left:1136.2px;top:970px;width:43.8px;height:43px;background:linear-gradient(#ffffff,#ececec);border:1px solid #bababa;border-radius:4px;box-sizing:border-box;"></div>
<div style="left:1186.2px;top:970px;width:43.8px;height:43px;background:linear-gradient(#ffffff,#ececec);border:1px solid #bababa;border-radius:4px;box-sizing:border-box;"></div>
<svg style="left:1134px;top:968px;" width="110" height="47" viewBox="1134 968 110 47"><defs>
<linearGradient id="lk1" x1="0" y1="0" x2="1" y2="0"><stop offset="0" stop-color="#b89a5a"/><stop offset=".5" stop-color="#ece2cb"/><stop offset="1" stop-color="#b89a5a"/></linearGradient>
<linearGradient id="lk2" x1="0" y1="0" x2="1" y2="0"><stop offset="0" stop-color="#5a5a5a"/><stop offset=".45" stop-color="#b5b5b5"/><stop offset="1" stop-color="#5e5e5e"/></linearGradient>
<linearGradient id="lk3" x1="0" y1="0" x2="1" y2="1"><stop offset="0" stop-color="#6a6a6a"/><stop offset=".5" stop-color="#b8b8b8"/><stop offset="1" stop-color="#6c6c6c"/></linearGradient>
</defs><path d="M1149.0 990 V985.5 A8.8 8.8 0 0 1 1166.6 985.5 V990" fill="none" stroke="url(#lk2)" stroke-width="5.4"/><rect x="1145.5" y="988.8" width="24.6" height="19.3" fill="url(#lk1)"/><path d="M1140.2 1007.8 L1147.0 991.5 L1149.8 996.3 Q1164.8 989.5 1175.3999999999999 1001.5 L1169.3 1004.8 Q1161.8 997.8 1154.6 1001.2 L1157.0 1005.6 Z" fill="url(#lk3)" stroke="#4a4a4a" stroke-width="0.8" stroke-linejoin="round"/><path d="M1199.0 990 V985.5 A8.8 8.8 0 0 1 1216.6 985.5 V990" fill="none" stroke="url(#lk2)" stroke-width="5.4"/><rect x="1195.5" y="988.8" width="24.6" height="19.3" fill="url(#lk1)"/><g transform="translate(2415.6 0) scale(-1 1)"><path d="M1190.2 1007.8 L1197.0 991.5 L1199.8 996.3 Q1214.8 989.5 1225.3999999999999 1001.5 L1219.3 1004.8 Q1211.8 997.8 1204.6 1001.2 L1207.0 1005.6 Z" fill="url(#lk3)" stroke="#4a4a4a" stroke-width="0.8" stroke-linejoin="round"/></g></svg>
<span class="t" style="left:1799.176px;top:977.8px;font:normal normal 22.8px/26px 'Liberation Sans', sans-serif;color:#000;letter-spacing:0.793px;-webkit-text-stroke-width:0.25px;">Page 1 of 1</span>
<span class="t" style="left:1958.374px;top:977.8px;font:normal normal 22.8px/26px 'Liberation Sans', sans-serif;color:#000;letter-spacing:1.712px;-webkit-text-stroke-width:0.25px;">93%</span>
<svg style="left:2015px;top:967px;" width="252" height="48" viewBox="2015 967 252 48"><path d="M2021 997 H2033 L2027 1003.2 Z" fill="#555"/><rect x="2041.7" y="970.5" width="43" height="42" rx="4" fill="#fdfdfd" stroke="#bcbcbc"/><rect x="2197.7" y="970.5" width="43" height="42" rx="4" fill="#fdfdfd" stroke="#bcbcbc"/><circle cx="2063" cy="991.2" r="14.9" fill="none" stroke="#1b1b1b" stroke-width="3"/><path d="M2053 991.2 H2073" stroke="#1b1b1b" stroke-width="3.1"/><circle cx="2219.2" cy="991.2" r="14.9" fill="none" stroke="#1b1b1b" stroke-width="3"/><path d="M2209.2 991.2 H2229.2 M2219.2 981.2 V1001.2" stroke="#1b1b1b" stroke-width="3.1"/><defs><linearGradient id="trk" x1="0" y1="0" x2="0" y2="1"><stop offset="0" stop-color="#c8c8c8"/><stop offset="1" stop-color="#e2e2e2"/></linearGradient><linearGradient id="hdl" x1="0" y1="0" x2="0" y2="1"><stop offset="0" stop-color="#ffffff"/><stop offset="1" stop-color="#ececec"/></linearGradient></defs><rect x="2092.5" y="987" width="97" height="8.4" rx="2.5" fill="url(#trk)" stroke="#bdbdbd" stroke-width="0.8"/><rect x="2092.5" y="987" width="36" height="8.4" rx="2.5" fill="#3b9bdf" stroke="#2f86c7" stroke-width="0.8"/><rect x="2124" y="980.6" width="19.6" height="19" rx="3" fill="url(#hdl)" stroke="#b3b3b3"/><rect x="2264" y="1012" width="1.2" height="1.2" fill="#c4c4c4"/><rect x="2264" y="1009" width="1.2" height="1.2" fill="#c4c4c4"/><rect x="2261" y="1012" width="1.2" height="1.2" fill="#c4c4c4"/><rect x="2264" y="1006" width="1.2" height="1.2" fill="#c4c4c4"/><rect x="2261" y="1009" width="1.2" height="1.2" fill="#c4c4c4"/><rect x="2258" y="1012" width="1.2" height="1.2" fill="#c4c4c4"/><rect x="2264" y="1003" width="1.2" height="1.2" fill="#c4c4c4"/><rect x="2261" y="1006" width="1.2" height="1.2" fill="#c4c4c4"/><rect x="2258" y="1009" width="1.2" height="1.2" fill="#c4c4c4"/><rect x="2255" y="1012" width="1.2" height="1.2" fill="#c4c4c4"/></svg>
<div style="left:0px;top:1015px;width:2267px;height:38px;background:#efefef;"></div>
<div style="left:0px;top:1053px;width:2267px;height:1px;background:#fff;"></div>
<div style="left:0px;top:1054px;width:2267px;height:1px;background:#000;"></div>
<span class="t" style="left:1680.6879999999999px;top:1021.4000000000001px;font:normal normal 22.8px/26px 'Liberation Sans', sans-serif;color:#000;letter-spacing:-0.079px;-webkit-text-stroke-width:0.25px;">en_US</span>
<span class="t" style="left:1792.29px;top:1021.4000000000001px;font:normal normal 22.8px/26px 'Liberation Sans', sans-serif;color:#000;letter-spacing:0.099px;-webkit-text-stroke-width:0.25px;">UTF-8</span>
<span class="t" style="left:1895.176px;top:1021.4000000000001px;font:normal normal 22.8px/26px 'Liberation Sans', sans-serif;color:#000;letter-spacing:0.808px;-webkit-text-stroke-width:0.25px;">Ready</span>
<span class="t" style="left:1986.2px;top:1021.4000000000001px;font:normal normal 22.8px/26px 'Liberation Sans', sans-serif;color:#000;letter-spacing:1.315px;-webkit-text-stroke-width:0.25px;">Automatic</span>
<svg style="left:1600px;top:1015px;" width="667" height="40" viewBox="1600 1015 667 40"><path d="M1627.6 1023.3 V1037.1 H1636.8 V1034" fill="none" stroke="#636363" stroke-width="2.6"/><path d="M1625.8 1024.4 H1629" stroke="#636363" stroke-width="2.2"/><path d="M1636.6 1024.5 H1648 M1642.4 1024.5 V1038.4" stroke="#636363" stroke-width="2.6" fill="none"/><polyline points="1626.60,1045.54 1626.95,1045.85 1627.30,1045.87 1627.65,1045.60 1628.00,1045.09 1628.35,1044.45 1628.70,1043.79 1629.05,1043.26 1629.40,1042.95 1629.75,1042.93 1630.10,1043.20 1630.45,1043.71 1630.80,1044.35 1631.15,1045.01 1631.50,1045.54 1631.85,1045.85 1632.20,1045.87 1632.55,1045.60 1632.90,1045.09 1633.25,1044.45 1633.60,1043.79 1633.95,1043.26 1634.30,1042.95 1634.65,1042.93 1635.00,1043.20 1635.35,1043.71 1635.70,1044.35 1636.05,1045.01 1636.40,1045.54 1636.75,1045.85 1637.10,1045.87 1637.45,1045.60 1637.80,1045.09 1638.15,1044.45 1638.50,1043.79 1638.85,1043.26 1639.20,1042.95 1639.55,1042.93 1639.90,1043.20 1640.25,1043.71 1640.60,1044.35 1640.95,1045.01 1641.30,1045.54 1641.65,1045.85 1642.00,1045.87 1642.35,1045.60 1642.70,1045.09 1643.05,1044.45 1643.40,1043.79 1643.75,1043.26 1644.10,1042.95 1644.45,1042.93 1644.80,1043.20 1645.15,1043.71 1645.50,1044.35 1645.85,1045.01 1646.20,1045.54 1646.55,1045.85 1646.90,1045.87 1647.25,1045.60" fill="none" stroke="#a0a0a0" stroke-width="1.5"/><path d="M1762.1 1040.9 H1773.9 L1768 1047 Z" fill="#555"/><path d="M1869.1 1040.9 H1880.9 L1875 1047 Z" fill="#555"/><defs><linearGradient id="bmw" x1="0" y1="0" x2="0" y2="1"><stop offset="0" stop-color="#fff"/><stop offset=".6" stop-color="#fff"/><stop offset="1" stop-color="#fff" stop-opacity="0"/></linearGradient><radialGradient id="bmp" cx=".55" cy=".4" r=".6"><stop offset="0" stop-color="#b030b0"/><stop offset="1" stop-color="#860086"/></radialGradient></defs><rect x="2119" y="1027" width="9" height="17" fill="url(#bmw)"/><path d="M2119 1026.8 H2143" stroke="#a8a8a8" stroke-width="1"/><path d="M2124.6 1026.4 Q2125.4 1023.2 2128 1023 H2139.6 Q2142 1023.2 2142.1 1026 V1045.2 L2134.5 1040.9 L2126.9 1045.2 V1026.4 Z" fill="url(#bmp)"/><path d="M2124.6 1026.4 Q2125.4 1023.2 2128 1023 L2126.9 1026.4 Z" fill="#5c005c"/><rect x="2163.9" y="1027" width="9" height="17" fill="url(#bmw)"/><path d="M2163.9 1026.8 H2187.9" stroke="#a8a8a8" stroke-width="1"/><path d="M2169.5 1026.4 Q2170.3 1023.2 2172.9 1023 H2184.5 Q2186.9 1023.2 2187.0 1026 V1045.2 L2179.4 1040.9 L2171.8 1045.2 V1026.4 Z" fill="url(#bmp)"/><path d="M2169.5 1026.4 Q2170.3 1023.2 2172.9 1023 L2171.8 1026.4 Z" fill="#5c005c"/><rect x="2209" y="1027" width="9" height="17" fill="url(#bmw)"/><path d="M2209 1026.8 H2233" stroke="#a8a8a8" stroke-width="1"/><path d="M2214.6 1026.4 Q2215.4 1023.2 2218 1023 H2229.6 Q2232 1023.2 2232.1 1026 V1045.2 L2224.5 1040.9 L2216.9 1045.2 V1026.4 Z" fill="url(#bmp)"/><path d="M2214.6 1026.4 Q2215.4 1023.2 2218 1023 L2216.9 1026.4 Z" fill="#5c005c"/></svg>
<span class="t" style="left:2129.326px;top:1023px;font:normal bold 17.2px/20px 'Liberation Sans', sans-serif;color:#fff;">1</span>
<span class="t" style="left:2174.57px;top:1023px;font:normal bold 17.2px/20px 'Liberation Sans', sans-serif;color:#fff;">2</span>
<span class="t" style="left:2219.713px;top:1023px;font:normal bold 17.2px/20px 'Liberation Sans', sans-serif;color:#fff;">3</span>
<svg style="left:2250px;top:1036px;" width="17" height="17" viewBox="0 0 17 17"><rect x="15" y="6" width="1" height="1" fill="#b4b4b4"/><rect x="15" y="9" width="1" height="1" fill="#b4b4b4"/><rect x="12" y="9" width="1" height="1" fill="#b4b4b4"/><rect x="15" y="12" width="1" height="1" fill="#b4b4b4"/><rect x="12" y="12" width="1" height="1" fill="#b4b4b4"/><rect x="9" y="12" width="1" height="1" fill="#b4b4b4"/><rect x="15" y="15" width="1" height="1" fill="#b4b4b4"/><rect x="12" y="15" width="1" height="1" fill="#b4b4b4"/><rect x="9" y="15" width="1" height="1" fill="#b4b4b4"/><rect x="6" y="15" width="1" height="1" fill="#b4b4b4"/></svg>
<svg style="left:0px;top:1019px;" width="80" height="32" viewBox="0 0 80 32"><rect x="1.5" y="0.5" width="31" height="30" rx="3.5" fill="#e2e2e2" stroke="#bdbdbd"/><rect x="5.5" y="3.5" width="23.5" height="23.5" rx="2" fill="#808080" stroke="#1d1d1d" stroke-width="1"/><rect x="6.3" y="4.3" width="6.5" height="21.9" rx="1" fill="#fff"/><path d="M13 3.5 V27 M13 19.7 H29" stroke="#111" stroke-width="1.1" fill="none"/><rect x="39.5" y="0.5" width="31" height="30" rx="3.5" fill="#e2e2e2" stroke="#bdbdbd"/><rect x="43.5" y="3.5" width="23.5" height="23.5" rx="2" fill="#808080" stroke="#1d1d1d" stroke-width="1"/><rect x="51.4" y="20.3" width="14.8" height="5.9" fill="#fff"/><path d="M51 3.5 V27 M51 19.7 H67" stroke="#111" stroke-width="1.1" fill="none"/></svg>
<div style="left:600px;top:130.3px;width:98px;height:34px;background:#ffffdc;border:1px solid #000;box-sizing:border-box;"></div>
<span class="t" style="left:605.1859999999999px;top:133.8px;font:normal normal 22.8px/26px 'Liberation Sans', sans-serif;color:#000;letter-spacing:0.665px;-webkit-text-stroke-width:0.25px;">View</span>
<span class="t" style="left:670.9559999999999px;top:139.8px;font:normal normal 16.8px/19px 'Liberation Sans', sans-serif;color:#9c9c9c;letter-spacing:0.812px;">F7</span>
<svg style="left:592px;top:110px;" width="26" height="28" viewBox="0 0 26 28"><path d="M6.6 4.2 V17 L9.6 14.4 L12.2 20.4 L14.6 19.4 L12.1 13.6 L16.2 13.4 Z" fill="#000" opacity=".35" transform="translate(2.6 2.8)" filter="url(#bl)"/><path d="M6.6 4.2 V17 L9.6 14.4 L12.2 20.4 L14.6 19.4 L12.1 13.6 L16.2 13.4 Z" fill="#fff" stroke="#555" stroke-width="1" stroke-linejoin="round"/></svg>
</body></html>
